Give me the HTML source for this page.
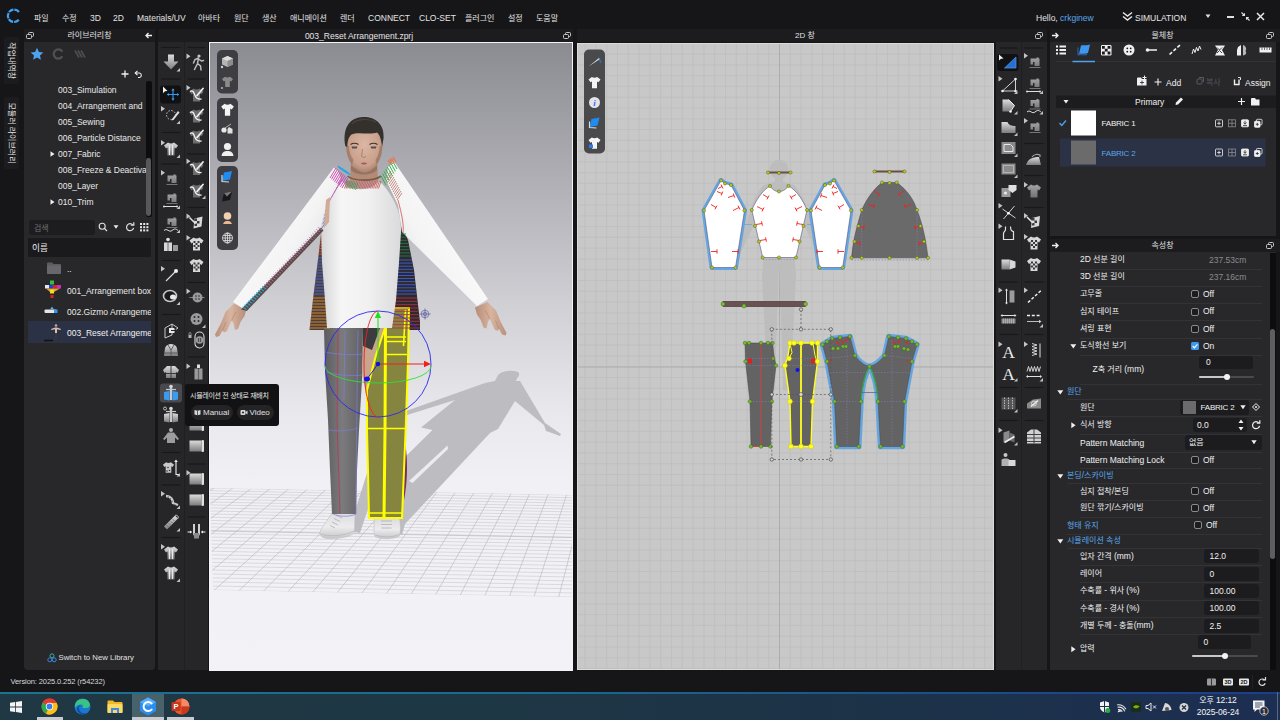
<!DOCTYPE html><html lang="ko"><head><meta charset="utf-8"><title>CLO</title><style>
*{margin:0;padding:0;box-sizing:border-box}
html,body{width:1280px;height:720px;overflow:hidden;background:#161619}
body{position:relative;font-family:"Liberation Sans","Noto Sans CJK KR",sans-serif;font-size:9px;color:#e6e6e6}
div,span.t,svg{position:absolute}
span.t{white-space:nowrap;line-height:1;letter-spacing:0}
span.t i{font-style:normal;font-size:1.0625em;line-height:0}
.k{font-family:"Noto Sans CJK KR","Liberation Sans",sans-serif}
</style></head><body><div style="left:4px;top:36.5px;width:15px;height:47.5px;background:#1c1c1f;border-radius:2px"></div><div style="left:4px;top:97px;width:15px;height:72px;background:#1c1c1f;border-radius:2px"></div><span class="t" style="left:14.5px;top:36.5px;font-size:8px;color:#e4e4e4;transform-origin:0 0;transform:rotate(90deg);letter-spacing:0;width:47.5px;text-align:center">작업내역창</span><span class="t" style="left:14.5px;top:97px;font-size:8px;color:#e4e4e4;transform-origin:0 0;transform:rotate(90deg);letter-spacing:0;width:72px;text-align:center">모듈러 라이브러리</span><div style="left:24px;top:42px;width:131px;height:628px;background:#28282b;border-radius:0 0 4px 4px"></div><div style="left:158px;top:42px;width:26px;height:628px;background:#262629;"></div><div style="left:184px;top:42px;width:1px;height:628px;background:#1f1f22;"></div><div style="left:185px;top:42px;width:23px;height:628px;background:#262629;"></div><div style="left:996px;top:42px;width:25px;height:628px;background:#262629;"></div><div style="left:1021px;top:42px;width:1px;height:628px;background:#1f1f22;"></div><div style="left:1022px;top:42px;width:25px;height:628px;background:#262629;"></div><div style="left:1050px;top:42px;width:226px;height:194px;background:#28282b;"></div><div style="left:1050px;top:252px;width:226px;height:418px;background:#28282b;"></div><span class="t" style="left:34px;top:14.6px;font-size:8px;color:#e4e4e4;">파일</span><span class="t" style="left:62px;top:14.6px;font-size:8px;color:#e4e4e4;">수정</span><span class="t" style="left:90px;top:14px;font-size:8.5px;color:#e4e4e4;">3D</span><span class="t" style="left:113px;top:14px;font-size:8.5px;color:#e4e4e4;">2D</span><span class="t" style="left:137px;top:14px;font-size:8.5px;color:#e4e4e4;">Materials/UV</span><span class="t" style="left:198px;top:14.6px;font-size:8px;color:#e4e4e4;">아바타</span><span class="t" style="left:234px;top:14.6px;font-size:8px;color:#e4e4e4;">원단</span><span class="t" style="left:262px;top:14.6px;font-size:8px;color:#e4e4e4;">생산</span><span class="t" style="left:290px;top:14.6px;font-size:8px;color:#e4e4e4;">애니메이션</span><span class="t" style="left:340px;top:14.6px;font-size:8px;color:#e4e4e4;">렌더</span><span class="t" style="left:368px;top:14px;font-size:8.5px;color:#e4e4e4;">CONNECT</span><span class="t" style="left:419px;top:14px;font-size:8.5px;color:#e4e4e4;">CLO-SET</span><span class="t" style="left:465px;top:14.6px;font-size:8px;color:#e4e4e4;">플러그인</span><span class="t" style="left:508px;top:14.6px;font-size:8px;color:#e4e4e4;">설정</span><span class="t" style="left:536px;top:14.6px;font-size:8px;color:#e4e4e4;">도움말</span><svg style="left:5px;top:7px" width="18" height="18" viewBox="0 0 18 18"><path d="M14 5A6.2 6.2 0 1 0 14 12.6" fill="none" stroke="#3da2f5" stroke-width="2.2" stroke-dasharray="5.2 0.9"/></svg><span class="t" style="left:1036px;top:14px;font-size:8.5px;color:#e4e4e4;">Hello, <span style="color:#5aa7ea">crkginew</span></span><svg style="left:1122px;top:11px" width="11" height="10" viewBox="0 0 11 10"><path d="M1 1.5L5.5 5L10 1.5M1 5.5L5.5 9L10 5.5" fill="none" stroke="#e8e8e8" stroke-width="1.4"/></svg><span class="t" style="left:1135px;top:14px;font-size:8.5px;color:#e8e8e8;">SIMULATION</span><svg style="left:1205px;top:14px" width="6" height="5"><path d="M0.5 0.5H5.5L3 4z" fill="#e0e0e0"/></svg><div style="left:1227px;top:16px;width:7px;height:1.5px;background:#e0e0e0;"></div><svg style="left:1241px;top:12px" width="9" height="9" viewBox="0 0 9 9"><path d="M0.5 0.5L3.5 3.5M3.5 1.2V3.5H1.2M8.5 8.5L5.5 5.5M5.5 7.8V5.5H7.8" fill="none" stroke="#e0e0e0" stroke-width="1.1"/></svg><svg style="left:1256px;top:12px" width="9" height="9" viewBox="0 0 9 9"><path d="M1 1L8 8M8 1L1 8" fill="none" stroke="#e8e8e8" stroke-width="1.5"/></svg><div style="left:24px;top:29px;width:131px;height:13px;background:#1c1c1f;"></div><svg style="left:26px;top:32px" width="8" height="7" viewBox="0 0 8 7"><rect x="2.5" y="0.5" width="5" height="4" rx="1" fill="none" stroke="#c8c8c8" stroke-width="1"/><rect x="0.5" y="2.5" width="5" height="4" rx="1" fill="#1d1d20" stroke="#c8c8c8" stroke-width="1"/></svg><span class="t" style="left:24px;top:32px;font-size:8px;color:#e0e0e0;width:131px;text-align:center;">라이브러리창</span><svg style="left:145px;top:32px" width="7" height="7" viewBox="0 0 7 7"><path d="M7 3.5H1M3.5 1L1 3.5L3.5 6" fill="none" stroke="#f0f0f0" stroke-width="1.3"/></svg><div style="left:158px;top:29px;width:415px;height:13px;background:#1c1c1f;"></div><span class="t" style="left:209px;top:32px;font-size:8.5px;color:#e4e4e4;width:300px;text-align:center;">003_Reset Arrangement.zprj</span><svg style="left:563px;top:32px" width="8" height="7" viewBox="0 0 8 7"><rect x="2.5" y="0.5" width="5" height="4" rx="1" fill="none" stroke="#c8c8c8" stroke-width="1"/><rect x="0.5" y="2.5" width="5" height="4" rx="1" fill="#1d1d20" stroke="#c8c8c8" stroke-width="1"/></svg><div style="left:577px;top:29px;width:470px;height:13px;background:#1c1c1f;"></div><span class="t" style="left:705px;top:32px;font-size:8px;color:#e0e0e0;width:200px;text-align:center;">2D 창</span><svg style="left:1035px;top:32px" width="8" height="7" viewBox="0 0 8 7"><rect x="2.5" y="0.5" width="5" height="4" rx="1" fill="none" stroke="#c8c8c8" stroke-width="1"/><rect x="0.5" y="2.5" width="5" height="4" rx="1" fill="#1d1d20" stroke="#c8c8c8" stroke-width="1"/></svg><div style="left:1050px;top:29px;width:230px;height:13px;background:#1c1c1f;"></div><svg style="left:1052px;top:32px" width="7" height="7" viewBox="0 0 7 7"><path d="M0 3.5H6M3.5 1L6 3.5L3.5 6" fill="none" stroke="#f0f0f0" stroke-width="1.3"/></svg><span class="t" style="left:1050px;top:32px;font-size:8px;color:#e0e0e0;width:225px;text-align:center;">물체창</span><svg style="left:1266px;top:32px" width="8" height="7" viewBox="0 0 8 7"><rect x="2.5" y="0.5" width="5" height="4" rx="1" fill="none" stroke="#c8c8c8" stroke-width="1"/><rect x="0.5" y="2.5" width="5" height="4" rx="1" fill="#1d1d20" stroke="#c8c8c8" stroke-width="1"/></svg><div style="left:1050px;top:239px;width:230px;height:13px;background:#1c1c1f;"></div><svg style="left:1052px;top:242px" width="7" height="7" viewBox="0 0 7 7"><path d="M0 3.5H6M3.5 1L6 3.5L3.5 6" fill="none" stroke="#f0f0f0" stroke-width="1.3"/></svg><span class="t" style="left:1050px;top:242px;font-size:8px;color:#e0e0e0;width:225px;text-align:center;">속성창</span><svg style="left:1266px;top:242px" width="8" height="7" viewBox="0 0 8 7"><rect x="2.5" y="0.5" width="5" height="4" rx="1" fill="none" stroke="#c8c8c8" stroke-width="1"/><rect x="0.5" y="2.5" width="5" height="4" rx="1" fill="#1d1d20" stroke="#c8c8c8" stroke-width="1"/></svg><span class="t" style="left:10.5px;top:678px;font-size:7.5px;color:#d8d8d8;letter-spacing:-0.1px;">Version: 2025.0.252 (r54232)</span><svg style="left:1205px;top:677px" width="70" height="10" viewBox="0 0 70 10"><rect x="2" y="1.5" width="9" height="7" rx="1" fill="#9a9a9a"/><rect x="6" y="1.5" width="1" height="7" fill="#333"/><rect x="18" y="1.5" width="10" height="7" rx="1" fill="#e8e8e8"/><text x="23" y="7.3" font-size="5.5" font-weight="bold" text-anchor="middle" fill="#161619" font-family="Liberation Sans,sans-serif">3D</text><rect x="34" y="1.5" width="10" height="7" rx="1" fill="#e8e8e8"/><text x="39" y="7.3" font-size="5.5" font-weight="bold" text-anchor="middle" fill="#161619" font-family="Liberation Sans,sans-serif">2D</text><path d="M59.5 3A3.2 3.2 0 1 0 60.2 6.2" fill="none" stroke="#e0e0e0" stroke-width="1.2"/><path d="M57.5 2.8H60.5V0" fill="none" stroke="#e0e0e0" stroke-width="1.2"/></svg><div style="left:1252px;top:675px;width:1px;height:14px;background:#222225;"></div><div style="left:0px;top:693px;width:1280px;height:27px;background:linear-gradient(90deg,#1f3843 0%,#1e3744 35%,#1c3248 70%,#1c2e52 100%);"></div><div style="left:0px;top:692px;width:1280px;height:1.8px;background:linear-gradient(90deg,#1b7393 0%,#1b6a90 40%,#1a4a8c 80%,#1a3f8a 100%);"></div><svg style="left:10px;top:701px" width="12" height="12" viewBox="0 0 12 12"><path d="M0 1.8L5 1.1V5.6H0zM5.8 1L12 0V5.6H5.8zM0 6.4H5V10.9L0 10.2zM5.8 6.4H12V12L5.8 11z" fill="#f4f4f4"/></svg><svg style="left:41px;top:698px" width="17" height="17" viewBox="0 0 17 17"><circle cx="8.5" cy="8.5" r="8" fill="#e33b2e"/><path d="M8.5 8.5L1.6 4.5A8 8 0 0 0 5 15.7z" fill="#2da94f"/><path d="M8.5 8.5L5 15.7A8 8 0 0 0 15.6 4.8H8.5z" fill="#fbc116"/><path d="M1.6 4.5A8 8 0 0 1 15.6 4.8H8.5z" fill="#e33b2e"/><circle cx="8.5" cy="8.5" r="3.7" fill="#fff"/><circle cx="8.5" cy="8.5" r="2.9" fill="#3b7ded"/></svg><div style="left:37px;top:717px;width:26px;height:3px;background:#c8ccd0;"></div><svg style="left:74px;top:698px" width="17" height="17" viewBox="0 0 17 17"><circle cx="8.5" cy="8.5" r="8" fill="#1b78d0"/><path d="M1 7A7.8 7.8 0 0 1 16 6.5C16 9 14 10 12 10H8.5C9.5 8 9 6.5 7 6.5C4 6.5 2 8 1 10z" fill="#39c481"/><path d="M3 12A6 6 0 0 0 13 14.5C10 16 6 15 5 11C4.5 9 6 7 7.5 7C5 7 2.5 9 3 12z" fill="#0c4f9e"/></svg><svg style="left:107px;top:699px" width="16" height="15" viewBox="0 0 16 15"><path d="M0.5 2.5A1 1 0 0 1 1.5 1.5H6L7.5 3H14.5A1 1 0 0 1 15.5 4V13A1 1 0 0 1 14.5 14H1.5A1 1 0 0 1 0.5 13z" fill="#f3b723"/><rect x="0.5" y="5" width="15" height="9" rx="1" fill="#fcd866"/><rect x="4" y="9" width="8" height="5" fill="#3a8be0"/><rect x="6" y="11" width="4" height="3" fill="#fcd866"/></svg><div style="left:132px;top:693.5px;width:32px;height:26.5px;background:#47626b;"></div><div style="left:132px;top:717px;width:32px;height:3px;background:#c8ccd0;"></div><svg style="left:139px;top:697px" width="18" height="19" viewBox="0 0 18 19"><path d="M9 0.5L17 5V14L9 18.5L1 14V5z" fill="#2b8df2"/><path d="M9 0.5L17 5L9 9.5L1 5z" fill="#55aefc"/><path d="M12.6 6.4A4.6 4.6 0 1 0 12.6 12.6" fill="none" stroke="#fff" stroke-width="2" stroke-linecap="round"/></svg><svg style="left:171px;top:698px" width="19" height="17" viewBox="0 0 19 17"><circle cx="10.5" cy="8.5" r="8" fill="#e8552f"/><path d="M10.5 0.5A8 8 0 0 1 18.5 8.5H10.5z" fill="#f58a65"/><path d="M10.5 8.5H18.5A8 8 0 0 1 10.5 16.5z" fill="#c93a1c"/><rect x="0.5" y="4" width="9" height="9" rx="1" fill="#c4381b"/><text x="5" y="11.3" font-size="7.5" font-weight="bold" text-anchor="middle" fill="#fff" font-family="Liberation Sans,sans-serif">P</text></svg><div style="left:167px;top:717px;width:27px;height:3px;background:#c8ccd0;"></div><svg style="left:1098px;top:698px" width="100" height="18" viewBox="0 0 100 18"><path d="M6.5 3L11 4.5V9C11 12 8.5 13.5 6.5 14.5C4.5 13.5 2 12 2 9V4.500z" fill="#f2f2f2"/><path d="M6.5 3V14.5M2 8.500H11" stroke="#1c3048" stroke-width="1"/><circle cx="9.800" cy="12.500" r="2.500" fill="#2fa84f"/><path d="M20 14A1 1 0 0 1 22 14M20 11.500A4 4 0 0 1 24 14M20 9A6.500 6.500 0 0 1 26.500 14M20 6.500A9 9 0 0 1 28 12" fill="none" stroke="#e8e8e8" stroke-width="1.1" transform="rotate(-8 22 12)"/><rect x="33" y="4" width="10" height="10" fill="#1d2b1d"/><path d="M35 9C36.500 7 39.500 6.500 41.500 8.500C40 10.500 37 11 35 9z" fill="#76b900"/><path d="M48 7.500H50L53 5V13L50 10.500H48z" fill="none" stroke="#e8e8e8" stroke-width="1"/><path d="M55 7.500L58 10.500M58 7.500L55 10.500" stroke="#e8e8e8" stroke-width="1"/><path d="M64 13L67 5C70 5 73 8 73.500 12z" fill="#d8d8d8"/><circle cx="69" cy="11" r="2" fill="#555"/><circle cx="86" cy="9.500" r="4.500" fill="#d4d4d4"/><path d="M84 7.500L88 11.500M88 7.500L84 11.500" stroke="#1c3048" stroke-width="1.3"/></svg><span class="t" style="left:1196px;top:696.6px;font-size:8px;color:#f4f4f4;width:44px;text-align:center;letter-spacing:-0.1px;">오후 <i>12:12</i></span><span class="t" style="left:1192px;top:708px;font-size:8.5px;color:#f4f4f4;width:52px;text-align:center;letter-spacing:-0.1px;">2025-06-24</span><svg style="left:1250px;top:699px" width="20" height="18" viewBox="0 0 20 18"><path d="M3 1.500H14.500V10.500H7L4.500 13V10.500H3z" fill="#f4f4f4"/><path d="M5 4H12.500M5 6H12.500M5 8H10" stroke="#1c3050" stroke-width="0.8"/><circle cx="14" cy="12" r="4.200" fill="#2c2c30" stroke="#d8d8d8" stroke-width="0.8"/><text x="14" y="14.600" font-size="7" text-anchor="middle" fill="#fff" font-family="Liberation Sans,sans-serif">1</text></svg><div style="left:1277px;top:692px;width:1px;height:28px;background:#5a6a80;"></div><svg style="left:30px;top:47px" width="14" height="14" viewBox="0 0 14 14"><path d="M7 0.800L8.900 4.900L13.300 5.400L10 8.400L10.900 12.800L7 10.600L3.100 12.800L4 8.400L0.700 5.400L5.100 4.900z" fill="#4da3f0"/></svg><svg style="left:52px;top:48px" width="12" height="12" viewBox="0 0 12 12"><path d="M9.800 3A4.600 4.600 0 1 0 9.800 9" fill="none" stroke="#505054" stroke-width="2.300" stroke-linecap="round"/></svg><svg style="left:74px;top:49px" width="12" height="10" viewBox="0 0 12 10"><path d="M1 1.500L5 8.500M4 1.500L8 8.500M7 1.500L11 8.500" stroke="#4c4c50" stroke-width="1.800" fill="none"/></svg><svg style="left:121px;top:70px" width="8" height="8" viewBox="0 0 8 8"><path d="M4 0.500V7.500M0.500 4H7.500" stroke="#f0f0f0" stroke-width="1.300"/></svg><svg style="left:134px;top:70px" width="9" height="8" viewBox="0 0 9 8"><path d="M1.500 3H5.500A2.300 2.300 0 0 1 5.500 7.500H4" fill="none" stroke="#f0f0f0" stroke-width="1.100"/><path d="M3.500 0.800L1.200 3L3.500 5.200" fill="none" stroke="#f0f0f0" stroke-width="1.100"/></svg><span class="t" style="left:58px;top:86.2px;font-size:8.5px;color:#e8e8e8;">003_Simulation</span><span class="t" style="left:58px;top:102.2px;font-size:8.5px;color:#e8e8e8;">004_Arrangement and</span><span class="t" style="left:58px;top:118.2px;font-size:8.5px;color:#e8e8e8;">005_Sewing</span><span class="t" style="left:58px;top:134.2px;font-size:8.5px;color:#e8e8e8;">006_Particle Distance</span><span class="t" style="left:58px;top:150.2px;font-size:8.5px;color:#e8e8e8;">007_Fabric</span><svg style="left:50px;top:151px" width="5" height="6"><path d="M0.500 0.300L4.500 3L0.500 5.700z" fill="#f0f0f0"/></svg><span class="t" style="left:58px;top:166.2px;font-size:8.5px;color:#e8e8e8;">008_Freeze &amp; Deactiva</span><span class="t" style="left:58px;top:182.2px;font-size:8.5px;color:#e8e8e8;">009_Layer</span><span class="t" style="left:58px;top:198.2px;font-size:8.5px;color:#e8e8e8;">010_Trim</span><svg style="left:50px;top:199px" width="5" height="6"><path d="M0.500 0.300L4.500 3L0.500 5.700z" fill="#f0f0f0"/></svg><div style="left:145.5px;top:81px;width:6.5px;height:136px;background:#0d0d0e;border-radius:2px"></div><div style="left:146.3px;top:158px;width:4.8px;height:57.5px;background:#58585a;border-radius:2.400px"></div><div style="left:29px;top:220px;width:66px;height:15px;background:#1d1d20;border-radius:3px"></div><span class="t" style="left:34px;top:224.5px;font-size:8px;color:#6e6e72;">검색</span><svg style="left:98px;top:222px" width="10" height="10" viewBox="0 0 10 10"><circle cx="4.200" cy="4.200" r="3" fill="none" stroke="#e0e0e0" stroke-width="1.100"/><path d="M6.400 6.400L9 9" stroke="#e0e0e0" stroke-width="1.300"/></svg><svg style="left:113px;top:225px" width="6" height="4"><path d="M0.500 0.300H5.500L3 3.800z" fill="#e8e8e8"/></svg><svg style="left:125px;top:222px" width="10" height="10" viewBox="0 0 10 10"><path d="M7.800 3A3.500 3.500 0 1 0 8.500 5.800" fill="none" stroke="#e0e0e0" stroke-width="1.200"/><path d="M5.800 3.200H8.800V0.300" fill="none" stroke="#e0e0e0" stroke-width="1.200"/></svg><svg style="left:140px;top:223px" width="9" height="9" viewBox="0 0 9 9"><g fill="#e8e8e8"><rect x="0" y="0" width="2" height="2"/><rect x="3.200" y="0" width="2" height="2"/><rect x="6.400" y="0" width="2" height="2"/><rect x="0" y="3.200" width="2" height="2"/><rect x="3.200" y="3.200" width="2" height="2"/><rect x="6.400" y="3.200" width="2" height="2"/><rect x="0" y="6.400" width="2" height="2"/><rect x="3.200" y="6.400" width="2" height="2"/><rect x="6.400" y="6.400" width="2" height="2"/></g></svg><div style="left:28px;top:238px;width:123px;height:19px;background:#1a1a1d;"></div><span class="t" style="left:32px;top:244px;font-size:8.6px;color:#f0f0f0;">이름</span><div style="left:28px;top:321px;width:123px;height:22px;background:#2b3245;"></div><svg style="left:47px;top:262px" width="14" height="12" viewBox="0 0 14 12"><path d="M0 1.500A1 1 0 0 1 1 0.500H5L6.500 2H13A1 1 0 0 1 14 3V11A1 1 0 0 1 13 12H1A1 1 0 0 1 0 11z" fill="#5c5c60"/><rect x="0" y="3.500" width="14" height="8.500" rx="1" fill="#68686c"/></svg><span class="t" style="left:67px;top:265px;font-size:8.5px;color:#e8e8e8;">..</span><svg style="left:44px;top:280px" width="20" height="19" viewBox="0 0 20 19"><rect x="6" y="0.500" width="4" height="4" fill="#30c040"/><rect x="1" y="5" width="4" height="3.500" fill="#e8e8e8"/><rect x="5" y="5" width="4" height="3.500" fill="#2040e0"/><rect x="9" y="5" width="4" height="3.500" fill="#e02020"/><rect x="13" y="5" width="4" height="3.500" fill="#c030c0"/><path d="M2 8.500L6 12H10L16 8.500z" fill="#e0a030"/><rect x="6" y="9.500" width="4" height="4" fill="#e8e020"/><rect x="6.500" y="15" width="3" height="3" fill="#e02020"/></svg><span class="t" style="left:67px;top:287px;font-size:8.5px;color:#e8e8e8;">001_Arrangement box</span><svg style="left:44px;top:305px" width="16" height="11" viewBox="0 0 16 11"><rect x="0.500" y="4.500" width="12" height="3.500" rx="1" fill="#e4e4e4"/><rect x="10" y="4.500" width="3.500" height="3.500" fill="#3a90f0"/><path d="M8 1.500L10 4.500H6z" fill="#60b0e0"/></svg><span class="t" style="left:67px;top:308px;font-size:8.5px;color:#e8e8e8;">002.Gizmo Arrangeme</span><svg style="left:44px;top:323px" width="18" height="19" viewBox="0 0 18 19"><circle cx="12" cy="2.500" r="1.300" fill="#c8a890"/><path d="M7 6L11 4.500H13L17 6L16.500 7L13 6.300V10H11V6.300L7.500 7z" fill="#d8c0b0"/><path d="M11 10H13L13.300 17H12.300L12 11.500L11.700 17H10.700z" fill="#3a3a3a"/><path d="M0 17.500H9" stroke="#111" stroke-width="1.500"/></svg><span class="t" style="left:67px;top:329px;font-size:8.5px;color:#f0f0f0;">003_Reset Arrangeme</span><div style="left:151px;top:260px;width:4px;height:90px;background:#28282b;"></div><svg style="left:47px;top:653px" width="10" height="10" viewBox="0 0 10 10"><circle cx="5" cy="2.800" r="2" fill="none" stroke="#38b0a0" stroke-width="1"/><circle cx="2.800" cy="6.800" r="2" fill="none" stroke="#3a80e0" stroke-width="1"/><circle cx="7.200" cy="6.800" r="2" fill="none" stroke="#3a90e8" stroke-width="1"/></svg><span class="t" style="left:58.5px;top:654px;font-size:7.8px;color:#e0e0e0;">Switch to New Library</span><svg style="left:0;top:0" width="1280" height="720" viewBox="0 0 1280 720"><defs><linearGradient id="ig" x1="0" y1="0" x2="0" y2="1"><stop offset="0" stop-color="#dcdcdc"/><stop offset="1" stop-color="#7c7c7c"/></linearGradient><linearGradient id="ig2" x1="0" y1="0" x2="0" y2="1"><stop offset="0" stop-color="#a4a4a4"/><stop offset="1" stop-color="#727272"/></linearGradient></defs><path d="M161.5 47.5H180.5" stroke="#18181a" stroke-width="1.200"/><path d="M161.5 79H180.5" stroke="#18181a" stroke-width="1.200"/><path d="M161.5 132.5H180.5" stroke="#18181a" stroke-width="1.200"/><path d="M161.5 164H180.5" stroke="#18181a" stroke-width="1.200"/><path d="M161.5 260.5H180.5" stroke="#18181a" stroke-width="1.200"/><path d="M161.5 314.5H180.5" stroke="#18181a" stroke-width="1.200"/><path d="M161.5 452.5H180.5" stroke="#18181a" stroke-width="1.200"/><path d="M161.5 485H180.5" stroke="#18181a" stroke-width="1.200"/><path d="M161.5 537.5H180.5" stroke="#18181a" stroke-width="1.200"/><path d="M187.5 47.5H205.5" stroke="#18181a" stroke-width="1.200"/><path d="M187.5 79H205.5" stroke="#18181a" stroke-width="1.200"/><path d="M187.5 154H205.5" stroke="#18181a" stroke-width="1.200"/><path d="M187.5 207.5H205.5" stroke="#18181a" stroke-width="1.200"/><path d="M187.5 282.5H205.5" stroke="#18181a" stroke-width="1.200"/><path d="M187.5 357H205.5" stroke="#18181a" stroke-width="1.200"/><path d="M187.5 464H205.5" stroke="#18181a" stroke-width="1.200"/><path d="M187.5 517H205.5" stroke="#18181a" stroke-width="1.200"/><rect x="160" y="383.500" width="22" height="19" rx="3" fill="#4a4a4e"/><g transform="translate(171 62.5)"><path d="M-3 -8H3V-1H7.500L0 7L-7.500 -1H-3z" fill="url(#ig)"/><path d="M9 5.500V9H5.500z" fill="#c0c0c0"/></g><rect x="160" y="85.5" width="21" height="18" rx="3" fill="#111113"/><g transform="translate(171 94)"><path d="M2 -4.500V5.500M-3 0.500H7" stroke="#3a9cf0" stroke-width="1.100"/><path d="M2 -5.800l1.600 2.200h-3.200zM2 6.800l1.600 -2.200h-3.200zM-4.300 0.500l2.200 -1.600v3.200zM8.300 0.500l-2.200 -1.600v3.200z" fill="#3a9cf0"/><path d="M-8 -7.500L-3.500 -3L-6 -2.800L-8 -0.800z" fill="#f4f4f4"/></g><g transform="translate(171 115)"><circle cx="0" cy="0" r="4.500" fill="none" stroke="#d0d0d0" stroke-width="0.900" stroke-dasharray="1.500 1.500"/><path d="M1 4L7 -4L8.500 -2.500L2.500 5L0.500 5.500z" fill="#e0e0e0"/><path d="M-10 -9L-6 -6.300L-10 -3.600z" fill="#c4c4c4"/><path d="M9 5.500V9H5.500z" fill="#c0c0c0"/></g><g transform="translate(171 149)"><path d="M-7 -3.500L-3 -6.500C-1.500 -5.300 1.500 -5.300 3 -6.500L7 -3.500L5 -0.500L3.500 -1.500V6.500H-3.500V-1.500L-5 -0.500z" fill="url(#ig)"/><path d="M-1.500 -4V6M1.500 -4V6" stroke="#e8e8e8" stroke-width="1"/><path d="M-10 -9L-6 -6.300L-10 -3.600z" fill="#c4c4c4"/><path d="M9 5.500V9H5.500z" fill="#c0c0c0"/></g><g transform="translate(171 179)"><path d="M-4.500 -4H1.500V-5H3.500V-4H4.500V3.500H-0.500V-0.500H-2V2H-4.500zM-5.500 4.600H5.500V5.600H-5.500z" fill="url(#ig2)" transform="translate(1 0.500)"/><path d="M-10 -9L-6 -6.300L-10 -3.600z" fill="#c4c4c4"/></g><g transform="translate(171 200)"><path d="M-4.500 -4H1.500V-5H3.500V-4H4.500V3.500H-0.500V-0.500H-2V2H-4.500zM-5.500 4.600H5.500V5.600H-5.500z" fill="url(#ig2)" transform="translate(1 -1.500)"/><path d="M-7 6.500H6" stroke="#e0e0e0" stroke-width="1"/><circle cx="-7" cy="6.500" r="1" fill="#e0e0e0"/><circle cx="6" cy="6.500" r="1" fill="#e0e0e0"/><path d="M9 5.500V9H5.500z" fill="#c0c0c0"/></g><g transform="translate(171 224)"><path d="M-4.500 -4H1.500V-5H3.500V-4H4.500V3.500H-0.500V-0.500H-2V2H-4.500zM-5.500 4.600H5.500V5.600H-5.500z" fill="url(#ig2)" transform="translate(1 -1.500)"/><path d="M-7 6.500C-4 3.500 -2 9 1 6.500S5 5 7 6.500" stroke="#e0e0e0" stroke-width="1" fill="none"/><path d="M9 5.500V9H5.500z" fill="#c0c0c0"/></g><g transform="translate(171 245)"><circle cx="-3" cy="-5.500" r="1.800" fill="#e0e0e0"/><path d="M-7 -2.500H1V6H-7z" fill="#d8d8d8"/><path d="M-3 -2.500V6" stroke="#555" stroke-width="0.800"/><path d="M2 0H7V6H2z" fill="#9a9a9a"/></g><g transform="translate(171 275)"><path d="M-5 6L4 -3" stroke="#e0e0e0" stroke-width="1.100"/><circle cx="5" cy="-4" r="2" fill="#f0f0f0"/><path d="M-10 -9L-6 -6.300L-10 -3.600z" fill="#c4c4c4"/></g><g transform="translate(171 296)"><ellipse cx="-1" cy="0" rx="6.500" ry="5.500" fill="#1a1a1a" stroke="#c8c8c8" stroke-width="1.600"/><ellipse cx="2" cy="1" rx="3" ry="2.500" fill="#e8e8e8"/><path d="M9 5.500V9H5.500z" fill="#c0c0c0"/></g><g transform="translate(171 330)"><path d="M-6 -2L1 -6V5L-6 8z" fill="none" stroke="#c8c8c8" stroke-width="1"/><path d="M1 -6L7 -2L1 2" fill="none" stroke="#c8c8c8" stroke-width="1"/><path d="M-2 -2H4V3H-2z" fill="#e8e8e8"/><path d="M0 0.500H5M3 -1.500L5.500 0.500L3 2.500" stroke="#222" stroke-width="1" fill="none"/></g><g transform="translate(171 350)"><path d="M-7 6L-6 -2C-5 -5 -2 -6 0 -6S5 -5 6 -2L7 6z" fill="url(#ig)"/><path d="M-3 -5L0 0L3 -5M0 0V6M-7 3H7" stroke="#555" stroke-width="0.900" fill="none"/></g><g transform="translate(171 371)"><path d="M-8 -1L-4 -5H4L8 -1L6.500 2L5 1V7H-5V1L-6.500 2z" fill="url(#ig)"/><path d="M0 -5V7M-5 2.500H5" stroke="#3a3a3a" stroke-width="1" fill="none"/></g><g transform="translate(171 393)"><circle cx="0" cy="-6.500" r="1.800" fill="#d8d8d8"/><path d="M-1.200 -5H1.200V7H-1.200z" fill="#c8c8c8"/><path d="M-7 -1L-1.500 -2V7.500L-7 6.500z" fill="#3a9cf0"/><path d="M7 -1L1.500 -2V7.500L7 6.500z" fill="#3a9cf0"/><path d="M-5 -3.500H5" stroke="#c8c8c8" stroke-width="1.200"/></g><g transform="translate(171 415)"><circle cx="0" cy="-6.500" r="1.800" fill="#d8d8d8"/><path d="M-1.200 -5H1.200V7H-1.200z" fill="#c8c8c8"/><path d="M-7 -1L-1.500 -2V7.500L-7 6.500z" fill="url(#ig)"/><path d="M7 -1L1.500 -2V7.500L7 6.500z" fill="url(#ig)"/><path d="M-5 -3.500H5" stroke="#c8c8c8" stroke-width="1.200"/><circle cx="-6" cy="-6.500" r="1.500" fill="none" stroke="#e0e0e0" stroke-width="0.800"/></g><g transform="translate(171 436)"><circle cx="0" cy="-6" r="2" fill="#b0b0b0"/><path d="M-8 3L-3 -3.500H3L8 3L6.500 4L4 1.500V7H-4V1.500L-6.500 4z" fill="#9c9c9c"/></g><g transform="translate(171 467.5)"><path d="M-7 -3.500L-3 -6.500C-1.500 -5.300 1.500 -5.300 3 -6.500L7 -3.500L5 -0.500L3.500 -1.500V6.500H-3.500V-1.500L-5 -0.500z" fill="#c8c8c8" transform="translate(-2.500 0) scale(0.800)"/><circle cx="-3" cy="0" r="0.800" fill="#333"/><circle cx="-1.500" cy="3" r="0.800" fill="#333"/><circle cx="-4" cy="3.500" r="0.800" fill="#333"/><path d="M5 -6.500V7H8" stroke="#f0f0f0" stroke-width="1.100" fill="none"/><path d="M5 -8l1.800 2.500h-3.600z" fill="#f0f0f0"/><path d="M9 5.500V9H5.500z" fill="#c0c0c0"/></g><g transform="translate(171 500)"><path d="M-5 -4C0 -4 2 0 2 3L7 5" stroke="#c8c8c8" stroke-width="2.400" fill="none"/><path d="M-3 -4l0.500 1.500M0 -2l-1 1.200M2 1l-1.500 0.500M4 4l-0.500 1.300" stroke="#333" stroke-width="0.600"/><path d="M-10 -9L-6 -6.300L-10 -3.600z" fill="#c4c4c4"/><path d="M9 5.500V9H5.500z" fill="#c0c0c0"/></g><g transform="translate(171 522.5)"><path d="M-7 4L4 -7L7 -4L-4 7z" fill="url(#ig)"/><path d="M-4 3l1.200 1.200M-2 1l1.200 1.200M0 -1l1.200 1.200M2 -3l1.200 1.200" stroke="#333" stroke-width="0.700"/><path d="M4 -7C6 -8 8 -6 7 -4" stroke="#c8c8c8" stroke-width="1" fill="none"/><path d="M9 5.500V9H5.500z" fill="#c0c0c0"/></g><g transform="translate(171 553)"><path d="M-7 -3.500L-3 -6.500C-1.500 -5.300 1.500 -5.300 3 -6.500L7 -3.500L5 -0.500L3.500 -1.500V6.500H-3.500V-1.500L-5 -0.500z" fill="url(#ig)"/><path d="M-1.500 -4V6M1.500 -4V6" stroke="#e8e8e8" stroke-width="1"/><path d="M-10 -9L-6 -6.300L-10 -3.600z" fill="#c4c4c4"/></g><g transform="translate(171 573)"><path d="M-7 -3.500L-3 -6.500C-1.500 -5.300 1.500 -5.300 3 -6.500L7 -3.500L5 -0.500L3.500 -1.500V6.500H-3.500V-1.500L-5 -0.500z" fill="url(#ig)"/><path d="M-1.500 -4V6M1.500 -4V6" stroke="#e8e8e8" stroke-width="1"/><path d="M9 5.500V9H5.500z" fill="#c0c0c0"/></g><g transform="translate(196.5 62.5)"><circle cx="2.500" cy="-6.500" r="1.600" fill="#c4c4c4"/><path d="M2 -4.500L-1.500 -3L-3 0.500M2 -4.500L1 1L-2 7M1 1L4 3.500L4.500 7.500M2 -3.500L5 -1.500L7 -2" stroke="#bcbcbc" stroke-width="1.500" fill="none" stroke-linecap="round"/><path d="M-10 -9L-6 -6.300L-10 -3.600z" fill="#c4c4c4"/></g><g transform="translate(196.5 94)"><path d="M-7 -3.500L-3 -6.500C-1.500 -5.300 1.500 -5.300 3 -6.500L7 -3.500L5 -0.500L3.500 -1.500V6.500H-3.500V-1.500L-5 -0.500z" fill="#6c6c6c" transform="translate(0 1)"/><path d="M-6.500 -2.500C-3 -4.500 -2.500 -1 -1.500 1.500S1.500 5.500 5 5" stroke="#f4f4f4" stroke-width="1.300" fill="none"/><path d="M0.500 1.500L6.500 -5.500" stroke="#f0f0f0" stroke-width="1.800" stroke-linecap="round"/><path d="M-10 -9L-6 -6.300L-10 -3.600z" fill="#c4c4c4"/></g><g transform="translate(196.5 115)"><path d="M-7 -3.500L-3 -6.500C-1.500 -5.300 1.500 -5.300 3 -6.500L7 -3.500L5 -0.500L3.500 -1.500V6.500H-3.500V-1.500L-5 -0.500z" fill="#6c6c6c" transform="translate(0 1)"/><path d="M-6.500 -2.500C-3 -4.500 -2.500 -1 -1.500 1.500S1.500 5.500 5 5" stroke="#f4f4f4" stroke-width="1.300" fill="none"/><path d="M0.500 1.500L6.500 -5.500" stroke="#f0f0f0" stroke-width="1.800" stroke-linecap="round"/></g><g transform="translate(196.5 136)"><path d="M-7 -3.500L-3 -6.500C-1.500 -5.300 1.500 -5.300 3 -6.500L7 -3.500L5 -0.500L3.500 -1.500V6.500H-3.500V-1.500L-5 -0.500z" fill="#6c6c6c" transform="translate(0 1)"/><path d="M-6.500 -2.500C-3 -4.500 -2.500 -1 -1.500 1.500S1.500 5.500 5 5" stroke="#f4f4f4" stroke-width="1.300" fill="none"/><path d="M0.500 1.500L6.500 -5.500" stroke="#f0f0f0" stroke-width="1.800" stroke-linecap="round"/></g><g transform="translate(196.5 167.5)"><path d="M-7 -3.500L-3 -6.500C-1.500 -5.300 1.500 -5.300 3 -6.500L7 -3.500L5 -0.500L3.500 -1.500V6.500H-3.500V-1.500L-5 -0.500z" fill="#6c6c6c" transform="translate(0 1)"/><path d="M-6.500 -2.500C-3 -4.500 -2.500 -1 -1.500 1.500S1.500 5.500 5 5" stroke="#f4f4f4" stroke-width="1.300" fill="none"/><path d="M0.500 1.500L6.500 -5.500" stroke="#f0f0f0" stroke-width="1.800" stroke-linecap="round"/><path d="M-10 -9L-6 -6.300L-10 -3.600z" fill="#c4c4c4"/></g><g transform="translate(196.5 190)"><path d="M-7 -3.500L-3 -6.500C-1.500 -5.300 1.500 -5.300 3 -6.500L7 -3.500L5 -0.500L3.500 -1.500V6.500H-3.500V-1.500L-5 -0.500z" fill="#6c6c6c" transform="translate(0 1)"/><path d="M-6.500 -2.500C-3 -4.500 -2.500 -1 -1.500 1.500S1.500 5.500 5 5" stroke="#f4f4f4" stroke-width="1.300" fill="none"/><path d="M0.500 1.500L6.500 -5.500" stroke="#f0f0f0" stroke-width="1.800" stroke-linecap="round"/><path d="M9 5.500V9H5.500z" fill="#c0c0c0"/></g><g transform="translate(196.5 222.5)"><path d="M-2 -4L6 -6L5 4L-3 6z" fill="#d8d8d8"/><path d="M-2 -4h2.500v2.500h-2.500zM0.500 -1.500h2.500v2.500h-2.500zM-2 1h2.500v2.500h-2.500z" fill="#3a3a3a"/><path d="M-7 -5L-1 1" stroke="#e8e8e8" stroke-width="1.500"/><path d="M-10 -9L-6 -6.300L-10 -3.600z" fill="#c4c4c4"/></g><g transform="translate(196.5 244)"><path d="M-7 -3.500L-3 -6.500C-1.500 -5.300 1.500 -5.300 3 -6.500L7 -3.500L5 -0.500L3.500 -1.500V6.500H-3.500V-1.500L-5 -0.500z" fill="#d8d8d8"/><path d="M-3 -3h2v2h-2zM1 -3h2v2h-2zM-1 -1h2v2h-2zM-3 1h2v2h-2zM1 1h2v2h-2zM-1 3h2v2h-2z" fill="#3a3a3a"/><path d="M-10 -9L-6 -6.300L-10 -3.600z" fill="#c4c4c4"/></g><g transform="translate(196.5 265.5)"><path d="M-7 -3.500L-3 -6.500C-1.500 -5.300 1.500 -5.300 3 -6.500L7 -3.500L5 -0.500L3.500 -1.500V6.500H-3.500V-1.500L-5 -0.500z" fill="#d8d8d8"/><path d="M-3 -3h2v2h-2zM1 -3h2v2h-2zM-1 -1h2v2h-2zM-3 1h2v2h-2zM1 1h2v2h-2zM-1 3h2v2h-2z" fill="#3a3a3a"/></g><g transform="translate(196.5 297.5)"><circle cx="1" cy="0" r="5" fill="#9a9a9a"/><circle cx="-0.500" cy="-1.500" r="0.800" fill="#2a2a2a"/><circle cx="2.500" cy="-1.500" r="0.800" fill="#2a2a2a"/><circle cx="-0.500" cy="1.500" r="0.800" fill="#2a2a2a"/><circle cx="2.500" cy="1.500" r="0.800" fill="#2a2a2a"/><path d="M-7 0H8" stroke="#9a9a9a" stroke-width="0.800"/><path d="M-10 -9L-6 -6.300L-10 -3.600z" fill="#c4c4c4"/></g><g transform="translate(196.5 319)"><circle cx="0" cy="0" r="6" fill="#9a9a9a"/><circle cx="-2" cy="-2" r="1" fill="#2a2a2a"/><circle cx="2" cy="-2" r="1" fill="#2a2a2a"/><circle cx="-2" cy="2" r="1" fill="#2a2a2a"/><circle cx="2" cy="2" r="1" fill="#2a2a2a"/><path d="M9 5.500V9H5.500z" fill="#c0c0c0"/></g><g transform="translate(196.5 340)"><rect x="-1.500" y="-8" width="9" height="16" rx="4.500" fill="none" stroke="#d8d8d8" stroke-width="1.100"/><circle cx="3" cy="0" r="3.800" fill="#9a9a9a"/><circle cx="2" cy="-1" r="0.700" fill="#222"/><circle cx="4" cy="-1" r="0.700" fill="#222"/><circle cx="2" cy="1" r="0.700" fill="#222"/><circle cx="4" cy="1" r="0.700" fill="#222"/><rect x="-8" y="-5" width="3" height="3" fill="#b0b0b0"/><path d="M-7.500 -5V-6.500A1 1 0 0 1 -5.500 -6.500V-5" stroke="#b0b0b0" stroke-width="0.700" fill="none"/></g><g transform="translate(196.5 372.5)"><rect x="-2" y="-4" width="8" height="11" fill="#9a9a9a"/><path d="M2 -4V7" stroke="#2a2a2a" stroke-width="1.200" stroke-dasharray="1 1"/><path d="M0.500 -8H3.500V-4.500H0.500z" fill="#e0e0e0"/><path d="M-10 -9L-6 -6.300L-10 -3.600z" fill="#c4c4c4"/></g><g transform="translate(196.5 425)"><rect x="-7" y="-5.500" width="12" height="11" fill="url(#ig)"/><rect x="5" y="-6" width="2.500" height="12" rx="1" fill="#e0e0e0"/></g><g transform="translate(196.5 446)"><rect x="-7" y="-5.500" width="12" height="11" fill="url(#ig)"/><rect x="5" y="-6" width="2.500" height="12" rx="1" fill="#e0e0e0"/></g><g transform="translate(196.5 479)"><rect x="-7" y="-5.500" width="12" height="11" fill="url(#ig)"/><rect x="5" y="-6" width="2.500" height="12" rx="1" fill="#e0e0e0"/><path d="M-10 -9L-6 -6.300L-10 -3.600z" fill="#c4c4c4"/></g><g transform="translate(196.5 500)"><rect x="-7" y="-5.500" width="12" height="11" fill="url(#ig)"/><rect x="5" y="-6" width="2.500" height="12" rx="1" fill="#e0e0e0"/></g><g transform="translate(196.5 531)"><path d="M-2.500 -7V2A2.500 2.500 0 0 0 2.500 2V-7" stroke="#d0d0d0" stroke-width="2" fill="none"/><rect x="-2.500" y="2" width="5" height="5.500" fill="#8a8a8a"/><path d="M-9 1H-5M9 1H5" stroke="#f0f0f0" stroke-width="1"/><path d="M-4.500 1l-2 -1.600v3.200zM4.500 1l2 -1.600v3.200z" fill="#f0f0f0"/></g><path d="M999.0 48H1018.0" stroke="#18181a" stroke-width="1.200"/><path d="M999.0 282H1018.0" stroke="#18181a" stroke-width="1.200"/><path d="M999.0 334.5H1018.0" stroke="#18181a" stroke-width="1.200"/><path d="M999.0 387.5H1018.0" stroke="#18181a" stroke-width="1.200"/><path d="M999.0 420.5H1018.0" stroke="#18181a" stroke-width="1.200"/><path d="M1024.5 48H1043.5" stroke="#18181a" stroke-width="1.200"/><path d="M1024.5 143.5H1043.5" stroke="#18181a" stroke-width="1.200"/><path d="M1024.5 175.5H1043.5" stroke="#18181a" stroke-width="1.200"/><path d="M1024.5 207.5H1043.5" stroke="#18181a" stroke-width="1.200"/><path d="M1024.5 282H1043.5" stroke="#18181a" stroke-width="1.200"/><path d="M1024.5 334.5H1043.5" stroke="#18181a" stroke-width="1.200"/><path d="M1024.5 387.5H1043.5" stroke="#18181a" stroke-width="1.200"/><path d="M1024.5 420.5H1043.5" stroke="#18181a" stroke-width="1.200"/><rect x="997.0" y="54" width="21.5" height="17" rx="3" fill="#111113"/><g transform="translate(1008.5 62)"><path d="M7.500 -5V6H-4z" fill="#2a6fd0"/><path d="M7.500 -5V6H-4z" fill="none" stroke="#4a9af0" stroke-width="0.700"/><path d="M-9.500 -7.500L-5 -3.500L-7.500 -3.300L-9.500 -1.500z" fill="#f4f4f4"/></g><g transform="translate(1008.5 85)"><path d="M7 -6V6H-6z" fill="none" stroke="#d0d0d0" stroke-width="1"/><circle cx="7" cy="-6" r="1.300" fill="#f0f0f0"/><circle cx="7" cy="6" r="1.300" fill="#f0f0f0"/><circle cx="-6" cy="6" r="1.300" fill="#f0f0f0"/><path d="M-10 -9L-6 -6.300L-10 -3.600z" fill="#c4c4c4"/><path d="M9 5.500V9H5.500z" fill="#c0c0c0"/></g><g transform="translate(1008.5 105.5)"><path d="M-6 -6H0L6 0L2 6H-6z" fill="url(#ig)"/><path d="M0 -6L6 0L2 6" stroke="#f0f0f0" stroke-width="1" fill="none"/><circle cx="2" cy="6" r="1.200" fill="#fff"/><path d="M9 5.500V9H5.500z" fill="#c0c0c0"/></g><g transform="translate(1008.5 127)"><path d="M-7 -5H-1C0 -2 3 -1 7 -1V6H-7z" fill="url(#ig)"/><path d="M9 5.500V9H5.500z" fill="#c0c0c0"/></g><g transform="translate(1008.5 148)"><path d="M-7 -6H7V6H-7z" fill="#8a8a8a"/><path d="M-4.500 -3.500H2L4.500 -1V3.500H-4.500z" fill="none" stroke="#e8e8e8" stroke-width="1"/><path d="M9 5.500V9H5.500z" fill="#c0c0c0"/></g><g transform="translate(1008.5 169)"><path d="M-7 -5.500H7V5.500H-7z" fill="#8a8a8a"/><path d="M-5 -3.500H5V3.500H-5z" fill="none" stroke="#e8e8e8" stroke-width="0.900" stroke-dasharray="1 1"/><path d="M9 5.500V9H5.500z" fill="#c0c0c0"/></g><g transform="translate(1008.5 191)"><path d="M-7 -3H2V6H-7z" fill="#9a9a9a"/><path d="M0 -6H8V-1L4 2L0 -1z" fill="#e0e0e0"/><circle cx="-3" cy="2" r="1.600" fill="#e8e8e8"/></g><g transform="translate(1008.5 212)"><path d="M-5 7L6 -6M-6 -3L7 6" stroke="#d0d0d0" stroke-width="1"/><circle cx="0" cy="1.300" r="1.300" fill="#fff"/><path d="M-10 -9L-6 -6.300L-10 -3.600z" fill="#c4c4c4"/></g><g transform="translate(1008.5 232.5)"><path d="M-3 -6V-3C-3 -1 -5 -1 -5 1V7H5V-1C3 -1 2 -3 2 -6" fill="none" stroke="#e0e0e0" stroke-width="1.200"/><path d="M-10 -9L-6 -6.300L-10 -3.600z" fill="#c4c4c4"/></g><g transform="translate(1008.5 264.5)"><path d="M-7 -5H1V5H-7z" fill="url(#ig)"/><path d="M1 -5L7 -3V3L1 5z" fill="#d8d8d8"/></g><g transform="translate(1008.5 296.5)"><path d="M-2 -7V7" stroke="#e0e0e0" stroke-width="1"/><path d="M-2 -8l1.500 2h-3zM-2 8l1.500 -2h-3z" fill="#e0e0e0"/><rect x="1" y="-6" width="5" height="12" fill="#8a8a8a"/><path d="M2.500 -6V6M4.500 -6V6" stroke="#ccc" stroke-width="0.500"/><path d="M-10 -9L-6 -6.300L-10 -3.600z" fill="#c4c4c4"/></g><g transform="translate(1008.5 318.5)"><path d="M-7 -3H7" stroke="#e0e0e0" stroke-width="1"/><path d="M-8 -3l2 -1.500v3zM8 -3l-2 -1.500v3z" fill="#e0e0e0"/><rect x="-7" y="0" width="14" height="5" fill="#8a8a8a"/><path d="M-5 0V5M-3 0V5M-1 0V5M1 0V5M3 0V5M5 0V5" stroke="#ccc" stroke-width="0.500"/></g><g transform="translate(1008.5 350.5)"><text x="0" y="7" font-size="17.500" text-anchor="middle" fill="#e8e8e8" font-family="Liberation Serif,serif">A</text><path d="M-10 -9L-6 -6.300L-10 -3.600z" fill="#c4c4c4"/></g><g transform="translate(1008.5 372.5)"><text x="0" y="7" font-size="17.500" text-anchor="middle" fill="#e8e8e8" font-family="Liberation Serif,serif">A</text><path d="M9 5.500V9H5.500z" fill="#c0c0c0"/></g><g transform="translate(1008.5 403.5)"><rect x="-7" y="-6" width="14" height="12" fill="#555"/><path d="M-4 -6V6M0 -6V6M4 -6V6" stroke="#d0d0d0" stroke-width="0.800" stroke-dasharray="1.500 1"/><path d="M9 5.500V9H5.500z" fill="#c0c0c0"/></g><g transform="translate(1008.5 436.5)"><path d="M-5 -4L1 -6V4L-5 6z" fill="#8a8a8a"/><path d="M1 -4L6 -2V6L1 4z" fill="#6a6a6a"/><path d="M-4 6L6 0" stroke="#f0f0f0" stroke-width="1.600"/><path d="M-10 -9L-6 -6.300L-10 -3.600z" fill="#c4c4c4"/><path d="M9 5.500V9H5.500z" fill="#c0c0c0"/></g><g transform="translate(1008.5 458)"><circle cx="-3" cy="-3" r="2" fill="#c8c8c8"/><path d="M-7 8V2C-7 0 1 0 1 2V8z" fill="#b0b0b0"/><rect x="0" y="2" width="7" height="6" fill="#d8d8d8"/></g><g transform="translate(1034 62)"><path d="M-4.500 -4H1.500V-5H3.500V-4H4.500V3.500H-0.500V-0.500H-2V2H-4.500zM-5.500 4.600H5.500V5.600H-5.500z" fill="url(#ig2)" transform="translate(1 0.500)"/><path d="M-10 -9L-6 -6.300L-10 -3.600z" fill="#c4c4c4"/></g><g transform="translate(1034 85)"><path d="M-4.500 -4H1.500V-5H3.500V-4H4.500V3.500H-0.500V-0.500H-2V2H-4.500zM-5.500 4.600H5.500V5.600H-5.500z" fill="url(#ig2)" transform="translate(1 -1.500)"/><path d="M-7 6.500H6" stroke="#e0e0e0" stroke-width="1"/><circle cx="-7" cy="6.500" r="1" fill="#e0e0e0"/><circle cx="6" cy="6.500" r="1" fill="#e0e0e0"/><path d="M9 5.500V9H5.500z" fill="#c0c0c0"/></g><g transform="translate(1034 105.5)"><path d="M-4.500 -4H1.500V-5H3.500V-4H4.500V3.500H-0.500V-0.500H-2V2H-4.500zM-5.500 4.600H5.500V5.600H-5.500z" fill="url(#ig2)" transform="translate(1 -1.500)"/><path d="M-7 6.500C-4 3.500 -2 9 1 6.500S5 5 7 6.500" stroke="#e0e0e0" stroke-width="1" fill="none"/><path d="M9 5.500V9H5.500z" fill="#c0c0c0"/></g><g transform="translate(1034 127)"><path d="M-4.500 -4H1.500V-5H3.500V-4H4.500V3.500H-0.500V-0.500H-2V2H-4.500zM-5.500 4.600H5.500V5.600H-5.500z" fill="url(#ig2)" transform="translate(1 0.500)"/><path d="M-10 -9L-6 -6.300L-10 -3.600z" fill="#c4c4c4"/></g><g transform="translate(1034 159)"><path d="M-8 6C-6 0 -2 -2 5 -2L7 6z" fill="url(#ig)"/><path d="M-2 -2C0 -5 4 -5 6 -4L6 -2" stroke="#a0a0a0" stroke-width="1.200" fill="none"/></g><g transform="translate(1034 191)"><path d="M-7 -3.500L-3 -6.500C-1.500 -5.300 1.500 -5.300 3 -6.500L7 -3.500L5 -0.500L3.500 -1.500V6.500H-3.500V-1.500L-5 -0.500z" fill="url(#ig2)"/><path d="M-10 -9L-6 -6.300L-10 -3.600z" fill="#c4c4c4"/></g><g transform="translate(1034 222)"><path d="M-2 -4L6 -6L5 4L-3 6z" fill="#d8d8d8"/><path d="M-2 -4h2.500v2.500h-2.500zM0.500 -1.500h2.500v2.500h-2.500zM-2 1h2.500v2.500h-2.500z" fill="#3a3a3a"/><path d="M-7 -5L-1 1" stroke="#e8e8e8" stroke-width="1.500"/><path d="M-10 -9L-6 -6.300L-10 -3.600z" fill="#c4c4c4"/></g><g transform="translate(1034 243)"><path d="M-7 -3.500L-3 -6.500C-1.500 -5.300 1.500 -5.300 3 -6.500L7 -3.500L5 -0.500L3.500 -1.500V6.500H-3.500V-1.500L-5 -0.500z" fill="#d8d8d8"/><path d="M-3 -3h2v2h-2zM1 -3h2v2h-2zM-1 -1h2v2h-2zM-3 1h2v2h-2zM1 1h2v2h-2zM-1 3h2v2h-2z" fill="#3a3a3a"/><path d="M-10 -9L-6 -6.300L-10 -3.600z" fill="#c4c4c4"/></g><g transform="translate(1034 264.5)"><path d="M-7 -3.500L-3 -6.500C-1.500 -5.300 1.500 -5.300 3 -6.500L7 -3.500L5 -0.500L3.500 -1.500V6.500H-3.500V-1.500L-5 -0.500z" fill="#d8d8d8"/><path d="M-3 -3h2v2h-2zM1 -3h2v2h-2zM-1 -1h2v2h-2zM-3 1h2v2h-2zM1 1h2v2h-2zM-1 3h2v2h-2z" fill="#3a3a3a"/></g><g transform="translate(1034 296.5)"><path d="M-6 6L7 -6" stroke="#f0f0f0" stroke-width="1.500" stroke-dasharray="3 1.800"/><path d="M-10 -9L-6 -6.300L-10 -3.600z" fill="#c4c4c4"/></g><g transform="translate(1034 318.5)"><path d="M-7 -3H7" stroke="#f0f0f0" stroke-width="1.500" stroke-dasharray="3 1.800"/><path d="M-7 3H6" stroke="#d0d0d0" stroke-width="0.900"/><path d="M7.500 3l-2.500 -1.800v3.600z" fill="#d0d0d0"/><path d="M9 5.500V9H5.500z" fill="#c0c0c0"/></g><g transform="translate(1034 350.5)"><path d="M-2 -7l5 1.500l-5 1.500l5 1.500l-5 1.500l5 1.500l-5 1.500l5 1.500l-5 1.500" stroke="#e0e0e0" stroke-width="0.900" fill="none"/><path d="M6 -7V7" stroke="#e0e0e0" stroke-width="1"/><path d="M-10 -9L-6 -6.300L-10 -3.600z" fill="#c4c4c4"/></g><g transform="translate(1034 372.5)"><path d="M-7 -1l1.500 -5l1.500 5l1.500 -5l1.500 5l1.500 -5l1.500 5l1.500 -5l1.500 5l1.500 -5" stroke="#e0e0e0" stroke-width="0.900" fill="none"/><path d="M-7 4H7" stroke="#e0e0e0" stroke-width="1"/><path d="M-8 4l2 -1.500v3zM8 4l-2 -1.500v3z" fill="#e0e0e0"/><path d="M9 5.500V9H5.500z" fill="#c0c0c0"/></g><g transform="translate(1034 403.5)"><path d="M-7 0L-1 -4L7 -5V5H-7z" fill="#8a8a8a"/><path d="M-3 3L4 -3" stroke="#f0f0f0" stroke-width="1.600"/><circle cx="0" cy="0" r="2.500" fill="none" stroke="#e0e0e0" stroke-width="0.800"/></g><g transform="translate(1034 436.5)"><path d="M-7 -4L-3 -7H3L7 -4V7H-7z" fill="#d0d0d0"/><path d="M-7 -2H7M-7 1.500H7M-7 5H7M0 -7V7" stroke="#333" stroke-width="0.900"/></g></svg><div style="left:209px;top:42px;width:364px;height:628.500px;background:linear-gradient(180deg,#8b8b92 0px,#adadb3 130px,#cfcfd4 260px,#e9e9ed 370px,#f1f1f5 440px,#f3f3f7 628px);border:1.500px solid #f4f4f6;border-bottom-width:1px"></div><svg style="left:210px;top:43px" width="362" height="626" viewBox="210 43 362 626"><defs><clipPath id="gclip"><polygon points="210,488 572,495 572,597 213,590"/></clipPath></defs><g clip-path="url(#gclip)" fill="none"><path d="M209 488.0L572 495.0M209 490.7L572 497.7M209 493.4L572 500.4M209 496.2L572 503.2M209 499.1L572 506.1M209 502.0L572 509.0M209 504.9L572 511.9M209 507.9L572 514.9M209 511.0L572 518.0M209 514.0L572 521.0M209 517.2L572 524.2M209 520.4L572 527.4M209 523.6L572 530.6M209 526.9L572 533.9M209 530.2L572 537.2M209 533.6L572 540.6M209 537.0L572 544.0M209 540.5L572 547.5M209 544.0L572 551.0M209 547.6L572 554.6M209 551.2L572 558.2M209 554.8L572 561.8M209 558.6L572 565.6M209 562.3L572 569.3M209 566.1L572 573.1M209 570.0L572 577.0M209 573.9L572 580.9M209 577.8L572 584.8M209 581.8L572 588.8M209 585.9L572 592.9M209 590.0L572 597.0" stroke="#cbcbd0" stroke-width="0.65"/><path d="M-169.8 603.4L108.8 463.3M-144.0 603.9L126.0 463.6M-118.1 604.4L143.2 464.0M-92.3 604.9L160.5 464.3M-66.5 605.4L177.7 464.6M-40.6 605.9L194.9 465.0M-14.8 606.4L212.1 465.3M11.0 606.9L229.3 465.6M36.8 607.4L246.6 466.0M62.7 607.9L263.8 466.3M88.5 608.4L281.0 466.6M114.3 608.9L298.2 467.0M140.2 609.4L315.4 467.3M166.0 609.9L332.7 467.6M191.8 610.4L349.9 468.0M217.7 610.9L367.1 468.3M243.5 611.4L384.3 468.6M269.3 611.9L401.5 469.0M295.1 612.4L418.8 469.3M321.0 612.9L436.0 469.6M346.8 613.4L453.2 470.0M372.6 613.9L470.4 470.3M398.5 614.4L487.6 470.6M424.3 614.9L504.9 471.0M450.1 615.5L522.1 471.3M475.9 616.0L539.3 471.6M501.8 616.5L556.5 472.0M527.6 617.0L573.7 472.3M553.4 617.5L591.0 472.6M579.3 618.0L608.2 473.0" stroke="#b4b4ba" stroke-width="0.6"/><path d="M209 531L572 537.500" stroke="#bcbcc2" stroke-width="0.7"/></g><defs>
<linearGradient id="slL" x1="0" y1="0" x2="1" y2="1" gradientTransform="rotate(-8)"><stop offset="0" stop-color="#ffffff"/><stop offset="0.55" stop-color="#f4f4f4"/><stop offset="1" stop-color="#c9c9cc"/></linearGradient>
<linearGradient id="bodyg" x1="0" y1="0" x2="1" y2="0"><stop offset="0" stop-color="#d4d4d6"/><stop offset="0.25" stop-color="#f6f6f6"/><stop offset="0.6" stop-color="#f0f0f0"/><stop offset="1" stop-color="#dadadc"/></linearGradient>
<linearGradient id="legg" x1="0" y1="0" x2="1" y2="0"><stop offset="0" stop-color="#5c5c5e"/><stop offset="0.45" stop-color="#7b7b7d"/><stop offset="1" stop-color="#606062"/></linearGradient>
<linearGradient id="skin" x1="0" y1="0" x2="1" y2="0"><stop offset="0" stop-color="#b8917c"/><stop offset="0.5" stop-color="#d9b49f"/><stop offset="1" stop-color="#b48b76"/></linearGradient>
<radialGradient id="face" cx="0.5" cy="0.45" r="0.6"><stop offset="0" stop-color="#dcb7a3"/><stop offset="0.7" stop-color="#c9a08b"/><stop offset="1" stop-color="#9e7966"/></radialGradient>
</defs><path d="M497 377C499 370 516 369 519 373C520 376 516 379 516 381L520 381L545 423L561 434L560 436L552 433L546 431L544 425L515 401L498 429L490 433L405 524L402 535L395 530L404 458L432.500 430L421 427.500L455 400L407 415L406 411L485 383L495 381z" fill="#bdbdc1"/><path d="M447.500 445.500L409 481L412.500 483L448 449z" fill="#ececf0"/><path d="M368 470L369 506L360 533L351 531L356 508z" fill="#bdbdc1"/><linearGradient id="shoe" x1="0" y1="0" x2="0" y2="1"><stop offset="0" stop-color="#dcdcde"/><stop offset="0.550" stop-color="#ececee"/><stop offset="1" stop-color="#c6c6ca"/></linearGradient><path d="M332 512.500C329 519 322 526 320 532C319.500 537 324 539 333 538.500C343 538 351 536.500 354.500 532.500L355 514z" fill="url(#shoe)" stroke="#b8b8bc" stroke-width="0.500"/><path d="M374.500 518C374 526 373.500 533 375 536.500C380 539.500 394 539.500 399.500 536C401 530 400.500 524 399.500 518z" fill="url(#shoe)" stroke="#b8b8bc" stroke-width="0.500"/><path d="M321 534C328 537 345 536 354 531M375.500 535C382 537.500 393 537.500 399 534.500" stroke="#b4b4b8" stroke-width="0.700" fill="none"/><path d="M336 515l6 3M334 518.500l6 3M332 522l6 3M330 525.500l5 2.500M381 521h11M381 524.500h11M381.500 528h10" stroke="#a8a8ae" stroke-width="0.700" fill="none"/><path d="M404 440C408 452 408 480 404 500z" fill="#7a2a6a"/><path d="M234 303.500L246.500 309L244.500 316L240.500 322L238 329L235 330L233.500 323L231.500 320.500L227 331L224 332.500L222.500 330.500L219.500 336L216 337L215 334.500L221 323L225.500 312z" fill="url(#skin)"/><path d="M231.500 320.500L236 312M226 322L222.500 330.500" stroke="#a98570" stroke-width="0.600" fill="none"/><g transform="translate(721.500 -1.500) scale(-1 1)"><path d="M234 303.500L246.500 309L244.500 316L240.500 322L238 329L235 330L233.500 323L231.500 320.500L227 331L224 332.500L222.500 330.500L219.500 336L216 337L215 334.500L221 323L225.500 312z" fill="url(#skin)"/><path d="M231.500 320.500L236 312M226 322L222.500 330.500" stroke="#a98570" stroke-width="0.600" fill="none"/></g><path d="M351 158L377 158L378 181L350 181z" fill="#b38b77"/><path d="M351 165C356 172 372 172 377 165L377 170C372 176 356 176 351 170z" fill="#8f6a58" opacity="0.700"/><path d="M346 140C346 128 352 122 364 122C376 122 382.500 128 382.500 140C383 150 381.500 157 378 163C374 169.500 368 172.500 364.500 172.500C361 172.500 355 169.500 351 163C347.500 157 345.500 150 346 140z" fill="url(#face)"/><path d="M346.500 146C346 152 348 159 352 164.500L353.500 160C350 155 349 150 349 146zM382 146C382.500 152 380.500 159 376.500 164.500L375.500 160C378.500 155 379.500 150 379.500 146z" fill="#8e6a58" opacity="0.550"/><path d="M345.300 146C342.500 130 348 118.500 361 117.200C374 116 384.500 123 383.600 138L382 147C381.500 140 380 135 377 132.500C370 135 357 131.500 351.500 134.500C348.500 137 347.500 141 347.300 147z" fill="#34302b"/><path d="M352 124C356 119 368 118 376 122" stroke="#4a443e" stroke-width="1.200" fill="none"/><path d="M350.500 144.500C353 143 356 143 358.500 144.500M369.500 144.500C372 143 375 143 377.500 144.500" stroke="#3e302a" stroke-width="1.100" fill="none"/><path d="M352 147.800h5M371 147.800h5" stroke="#4a5868" stroke-width="1.400"/><path d="M351.500 146.800h6M370.500 146.800h6" stroke="#3a2c28" stroke-width="0.500"/><path d="M360.800 163.200C362.500 162.300 365.500 162.300 367.200 163.200C365.500 165 362.500 165 360.800 163.200z" fill="#a8585a"/><path d="M362.500 149L361.500 156.500L364 157.500L366 156.500" stroke="#a67e6a" stroke-width="0.900" fill="none"/><path d="M322 226L318 260L313.500 295L309.500 330L328 330L324 260z" fill="#4a3f3a"/><path d="M400 222L408 240L414 270L420 322L420 330L391 330L399 260z" fill="#2e2a2c"/><path d="M324 328L364 328L362 380L359 430L357 470L356 514L332 514L330 470L328 420L325 370z" fill="url(#legg)"/><path d="M363 328L388 328L372 385L366 395L362 372z" fill="#c9a58e"/><path d="M363 328L380 328L372 350L363 346z" fill="#3c3c3e"/><path d="M338 330L337 420L340 514" stroke="#c03050" stroke-width="0.7" fill="none"/><path d="M325 352C340 355 355 355 363 354M326 372C340 376 355 376 362 375M345 330L344 400M358 330C357 400 356 460 356 514M329 430C340 432 352 430 358 428M333 514C340 517 350 517 356 514" stroke="#7d7ddd" stroke-width="0.7" fill="none"/><path d="M393 308L409 308L408 360L406 420L404 470L402 518L369 518L368 470L367 430L367 390L376 355L385 328z" fill="#85853f" stroke="#ffff00" stroke-width="2"/><path d="M385.500 326L385 430L384 518" stroke="#ffff00" stroke-width="3" fill="none"/><path d="M386 337H406M386 341.500H406M386 354.500H407M368 428.500H405M370 513H402M405.500 310L403.500 346" stroke="#ffff00" stroke-width="1.6" fill="none"/><path d="M338 171L334 167.500L233 302L245 310L323 229L330 200L341 179z" fill="url(#slL)"/><path d="M389 165L393 160L488 299L477 306L403 232L397 199z" fill="url(#slL)" transform="translate(781 0) scale(-1 1)" style="display:none"/><linearGradient id="slR" x1="1" y1="0" x2="0" y2="1" gradientTransform="rotate(8)"><stop offset="0" stop-color="#ffffff"/><stop offset="0.55" stop-color="#f4f4f4"/><stop offset="1" stop-color="#c4c4c8"/></linearGradient><path d="M388 167L393 160L488 299L477 306L402 232L398 205L386 180z" fill="url(#slR)"/><path d="M321.0 232.0H326.0M320.7 234.8H326.0M320.4 237.5H326.0M320.1 240.2H326.0M319.8 243.0H326.0M319.4 245.8H326.0M319.1 248.5H326.0M318.8 251.2H326.0M318.5 254.0H326.0" stroke="#e05030" stroke-width="0.9" fill="none"/><path d="M318.0 258.0H326.0M317.6 261.0H326.2M317.2 264.0H326.3M316.9 267.0H326.5M316.5 270.0H326.7M316.1 273.0H326.8M315.8 276.0H327.0M315.4 279.0H327.2M315.0 282.0H327.3M314.6 285.0H327.5M314.2 288.0H327.7M313.9 291.0H327.8M313.5 294.0H328.0" stroke="#4a6ae0" stroke-width="0.9" fill="none"/><path d="M313.0 298.0H328.0M312.6 301.0H328.2M312.3 304.0H328.4M311.9 307.0H328.6M311.6 310.0H328.8M311.2 313.0H329.0M310.9 316.0H329.2M310.6 319.0H329.4M310.2 322.0H329.6M309.9 325.0H329.8M309.5 328.0H330.0" stroke="#e08a30" stroke-width="0.9" fill="none"/><path d="M396.0 234.0H406.0M396.0 237.1H406.7M396.0 240.3H407.4M396.0 243.4H408.1M396.0 246.6H408.9M396.0 249.7H409.6M396.0 252.9H410.3M396.0 256.0H411.0" stroke="#1f7a4a" stroke-width="0.9" fill="none"/><path d="M396.0 260.0H412.0M395.8 263.1H412.4M395.6 266.2H412.8M395.5 269.3H413.2M395.3 272.4H413.6M395.1 275.5H414.0M394.9 278.5H414.5M394.7 281.6H414.9M394.5 284.7H415.3M394.4 287.8H415.7M394.2 290.9H416.1M394.0 294.0H416.5" stroke="#3a5ee0" stroke-width="0.9" fill="none"/><path d="M394.0 298.0H417.0M393.7 301.3H417.3M393.3 304.7H417.7M393.0 308.0H418.0M392.7 311.3H418.3M392.3 314.7H418.7M392.0 318.0H419.0M391.7 321.3H419.3M391.3 324.7H419.7M391.0 328.0H420.0" stroke="#b03048" stroke-width="0.9" fill="none"/><path d="M342 181C350 192 372 192 378.500 181C384 184 393 197 397 208C400 216 401.500 224 401 232L399 262L396 300L392 328L327 328L325 300L322 262L321 228C322 218 327 204 333 195C336 190 339 185 342 181z" fill="url(#bodyg)"/><path d="M347.500 176C354 181.500 374 181.500 381 176" stroke="#7a5a44" stroke-width="1.6" fill="none"/><path d="M347.0 181.0l-2.5 7.5M348.6 181.0l-2.5 7.5M350.2 181.0l-2.5 7.5M351.9 181.0l-2.5 7.5M353.5 181.0l-2.5 7.5M355.1 181.0l-2.5 7.5M356.7 181.0l-2.5 7.5M358.3 181.0l-2.5 7.5M360.0 181.0l-2.5 7.5M361.6 181.0l-2.5 7.5M363.2 181.0l-2.5 7.5M364.8 181.0l-2.5 7.5M366.4 181.0l-2.5 7.5M368.0 181.0l-2.5 7.5M369.7 181.0l-2.5 7.5M371.3 181.0l-2.5 7.5M372.9 181.0l-2.5 7.5M374.5 181.0l-2.5 7.5M376.1 181.0l-2.5 7.5M377.8 181.0l-2.5 7.5M379.4 181.0l-2.5 7.5M381.0 181.0l-2.5 7.5" stroke="#c8524a" stroke-width="0.8" fill="none"/><path d="M348.0 180.0l-2.5 7.0M349.7 180.5l-2.5 7.0M351.3 181.0l-2.5 7.0M353.0 181.5l-2.5 7.0M354.7 182.0l-2.5 7.0M356.3 182.5l-2.5 7.0M358.0 183.0l-2.5 7.0" stroke="#3fa060" stroke-width="0.8" fill="none"/><path d="M336.0 168.0l-6.0 10.0M337.5 169.2l-6.0 10.0M339.0 170.5l-6.0 10.0M340.5 171.8l-6.0 10.0M342.0 173.0l-6.0 10.0M343.5 174.2l-6.0 10.0M345.0 175.5l-6.0 10.0M346.5 176.8l-6.0 10.0M348.0 178.0l-6.0 10.0" stroke="#d040b0" stroke-width="0.9" fill="none"/><path d="M338.0 166.0l3.0 3.0M339.8 167.2l3.0 3.0M341.6 168.4l3.0 3.0M343.4 169.6l3.0 3.0M345.2 170.8l3.0 3.0M347.0 172.0l3.0 3.0" stroke="#20a8e0" stroke-width="1.6" fill="none"/><path d="M339.0 184.0l3.0 -5.0M336.6 188.2l3.0 -5.0M334.2 192.4l3.0 -5.0M331.8 196.6l3.0 -5.0M329.4 200.8l3.0 -5.0M327.0 205.0l3.0 -5.0" stroke="#c050b0" stroke-width="0.8" fill="none"/><path d="M326.0 207.0l3.0 -5.0M325.2 211.2l3.0 -5.0M324.4 215.4l3.0 -5.0M323.6 219.6l3.0 -5.0M322.8 223.8l3.0 -5.0M322.0 228.0l3.0 -5.0" stroke="#5a6ad8" stroke-width="0.8" fill="none"/><path d="M381.0 176.0l5.0 9.0M382.6 173.7l5.0 9.0M384.1 171.4l5.0 9.0M385.7 169.1l5.0 9.0M387.3 166.9l5.0 9.0M388.9 164.6l5.0 9.0M390.4 162.3l5.0 9.0M392.0 160.0l5.0 9.0" stroke="#18b040" stroke-width="0.9" fill="none"/><path d="M388.0 160.0l3.0 5.0M389.7 159.0l3.0 5.0M391.3 158.0l3.0 5.0M393.0 157.0l3.0 5.0" stroke="#f07050" stroke-width="1.2" fill="none"/><path d="M386.0 178.0l5.0 -7.0M387.0 180.0l5.0 -7.0M388.0 182.0l5.0 -7.0M389.0 184.0l5.0 -7.0M390.0 186.0l5.0 -7.0M391.0 188.0l5.0 -7.0M392.0 190.0l5.0 -7.0M393.0 192.0l5.0 -7.0M394.0 194.0l5.0 -7.0M395.0 196.0l5.0 -7.0M396.0 198.0l5.0 -7.0M397.0 200.0l5.0 -7.0" stroke="#b87060" stroke-width="0.8" fill="none"/><path d="M241 309.500L246.800 311L323.500 230.500L321 227.500z" fill="#5c4b45"/><path d="M246.5 309.5l-3.8 -2.6M248.4 307.4l-3.8 -2.6M250.4 305.4l-3.8 -2.6M252.3 303.4l-3.8 -2.6M254.3 301.3l-3.8 -2.6M256.2 299.2l-3.8 -2.6M258.2 297.2l-3.8 -2.6M260.1 295.1l-3.8 -2.6M262.1 293.1l-3.8 -2.6M264.1 291.1l-3.8 -2.6M266.0 289.0l-3.8 -2.6" stroke="#2aa4d8" stroke-width="1.1" fill="none"/><path d="M268.0 287.0l-3.8 -2.6M269.9 285.0l-3.8 -2.6M271.7 283.1l-3.8 -2.6M273.6 281.1l-3.8 -2.6M275.4 279.1l-3.8 -2.6M277.3 277.2l-3.8 -2.6M279.2 275.2l-3.8 -2.6M281.0 273.2l-3.8 -2.6M282.9 271.3l-3.8 -2.6M284.8 269.3l-3.8 -2.6M286.6 267.3l-3.8 -2.6M288.5 265.4l-3.8 -2.6M290.3 263.4l-3.8 -2.6M292.2 261.4l-3.8 -2.6M294.1 259.5l-3.8 -2.6M295.9 257.5l-3.8 -2.6M297.8 255.6l-3.8 -2.6M299.7 253.6l-3.8 -2.6M301.5 251.6l-3.8 -2.6M303.4 249.7l-3.8 -2.6M305.2 247.7l-3.8 -2.6M307.1 245.7l-3.8 -2.6M309.0 243.8l-3.8 -2.6M310.8 241.8l-3.8 -2.6M312.7 239.8l-3.8 -2.6M314.6 237.9l-3.8 -2.6M316.4 235.9l-3.8 -2.6M318.3 233.9l-3.8 -2.6M320.1 232.0l-3.8 -2.6M322.0 230.0l-3.8 -2.6" stroke="#b274a8" stroke-width="0.9" fill="none"/><path d="M326 200L330 197L329 222L324 228z" fill="#d2ab94"/><path d="M398 200C402 215 404 225 403 233" stroke="#d05050" stroke-width="0.8" fill="none"/><circle cx="378" cy="364" r="53" fill="none" stroke="#2828f0" stroke-width="0.9"/><path d="M325 366A53 17 0 0 0 431 366" fill="none" stroke="#30e030" stroke-width="0.9"/><path d="M378 311A14 53 0 0 0 378 417" fill="none" stroke="#f02020" stroke-width="0.9"/><path d="M378 364V318" stroke="#20e020" stroke-width="1"/><path d="M378 311l-3.200 7h6.400z" fill="#20e020"/><path d="M378 364H424" stroke="#f02020" stroke-width="1"/><path d="M431 364l-7 -3.200v6.400z" fill="#f02020"/><path d="M378 364L367 379" stroke="#2020f0" stroke-width="1"/><ellipse cx="367" cy="379" rx="3" ry="2.500" fill="#1010f0"/><circle cx="378" cy="364" r="2.200" fill="#1010e0"/><g stroke="#5a5aa0" stroke-width="0.7" fill="none"><circle cx="425" cy="314" r="3.800"/><circle cx="425" cy="314" r="1.800"/><path d="M425 308.500v11M419.500 314h11"/></g><rect x="217" y="50" width="21" height="43.500" rx="5" fill="#3e3e42"/><rect x="217" y="98" width="21" height="64" rx="5" fill="#3e3e42"/><rect x="217" y="166" width="21" height="84" rx="5" fill="#3e3e42"/><path d="M227.500 56L233 58.500V64.500L227.500 67L222 64.500V58.500z" fill="#b4b4b4"/><path d="M227.500 56L233 58.500L227.500 61L222 58.500z" fill="#dcdcdc"/><path d="M227.500 61L233 58.500V64.500L227.500 67z" fill="#8c8c8c"/><circle cx="222" cy="67" r="1.200" fill="#cfcfcf"/><path d="M222 79l3 -2.300c1.200 1 3.800 1 5 0l3 2.300l-1.800 2.600l-1.400 -0.800v6.200h-4.600v-6.200l-1.400 0.800z" fill="#8a8a8c"/><circle cx="222" cy="88" r="1.100" fill="#b0b0b0"/><path d="M222 106.5l3 -2.300c1.200 1 3.800 1 5 0l3 2.300l-1.800 2.600l-1.400 -0.800v6.200h-4.600v-6.200l-1.400 0.800z" fill="#f4f4f4" transform="translate(-34.100 -16) scale(1.150)"/><circle cx="224" cy="130" r="2.600" fill="#e8e8e8"/><path d="M229 127l3.500 2v4.500h-5v-4.500z" fill="#e0e0e0"/><path d="M225 128l6 -4" stroke="#d0d0d0" stroke-width="0.800"/><circle cx="227.500" cy="146.500" r="3.600" fill="#f0f0f0"/><path d="M221.500 156c0.500 -4 3 -5 6 -5s5.500 1 6 5z" fill="#f0f0f0"/><path d="M224 172.500l8 -1.500l-2 8.500l-8 1.500z" fill="#1e8cf0"/><path d="M222 175v6.500l7 0.500" fill="none" stroke="#dcdcdc" stroke-width="1.200"/><path d="M224 193l8 -1.500l-2 8.500l-8 1.500z" fill="#18181a"/><path d="M224 193l8 -1.500l-5 5z" fill="#77777a"/><circle cx="227.500" cy="216" r="3.800" fill="#f2cfb0"/><path d="M223 224c1 -2.500 2.500 -3 4.500 -3s3.500 0.500 4.500 3z" fill="#e8b890"/><g fill="none" stroke="#e4e4e4" stroke-width="0.800"><circle cx="227.500" cy="238" r="5"/><ellipse cx="227.500" cy="238" rx="2.300" ry="5"/><path d="M222.500 238h10M223.300 235.500h8.400M223.300 240.500h8.400M227.500 233v10"/></g></svg><div style="left:185px;top:384px;width:94px;height:42px;background:#121214;border-radius:3px"></div><span class="t" style="left:190px;top:391.500px;font-size:7px;color:#e6e6e6;letter-spacing:-0.300px">시뮬레이션 전 상태로 재배치</span><div style="left:191px;top:405px;width:42px;height:15px;background:#242427;border-radius:7.500px"></div><div style="left:237px;top:405px;width:37px;height:15px;background:#242427;border-radius:7.500px"></div><svg style="left:194px;top:409px" width="7" height="7" viewBox="0 0 7 7"><path d="M0.500 1l3 0.800l3 -0.800v4.500l-3 0.800l-3 -0.800z" fill="#d8d8d8"/><path d="M3.500 1.800v4.500" stroke="#242427" stroke-width="0.700"/></svg><span class="t" style="left:203px;top:408.500px;font-size:8px;color:#e0e0e0">Manual</span><svg style="left:240px;top:409px" width="8" height="7" viewBox="0 0 8 7"><rect x="0.500" y="1" width="5" height="5" rx="1" fill="#d8d8d8"/><path d="M5.500 3l2 -1.500v4l-2 -1.500z" fill="#d8d8d8"/><circle cx="3" cy="3.500" r="1" fill="#242427"/></svg><span class="t" style="left:249.500px;top:408.500px;font-size:8px;color:#e0e0e0">Video</span><div style="left:577px;top:42.5px;width:417px;height:627px;background:#c8c8c8;border:1px solid #dcdcdc"></div><svg style="left:578px;top:43.5px" width="415" height="625" viewBox="578 43.5 415 625"><path d="M585.1 43V670M595.9 43V670M606.7 43V670M617.5 43V670M628.3 43V670M639.1 43V670M649.9 43V670M660.7 43V670M671.5 43V670M682.3 43V670M693.1 43V670M703.9 43V670M714.7 43V670M725.5 43V670M736.3 43V670M747.1 43V670M757.9 43V670M768.7 43V670M779.5 43V670M790.3 43V670M801.1 43V670M811.9 43V670M822.7 43V670M833.5 43V670M844.3 43V670M855.1 43V670M865.9 43V670M876.7 43V670M887.5 43V670M898.3 43V670M909.1 43V670M919.9 43V670M930.7 43V670M941.5 43V670M952.3 43V670M963.1 43V670M973.9 43V670M984.7 43V670M578 53.6H994M578 64.4H994M578 75.1H994M578 85.9H994M578 96.7H994M578 107.5H994M578 118.3H994M578 129.0H994M578 139.8H994M578 150.6H994M578 161.4H994M578 172.2H994M578 182.9H994M578 193.7H994M578 204.5H994M578 215.3H994M578 226.1H994M578 236.8H994M578 247.6H994M578 258.4H994M578 269.2H994M578 280.0H994M578 290.7H994M578 301.5H994M578 312.3H994M578 323.1H994M578 333.9H994M578 344.6H994M578 355.4H994M578 366.2H994M578 377.0H994M578 387.8H994M578 398.5H994M578 409.3H994M578 420.1H994M578 430.9H994M578 441.7H994M578 452.4H994M578 463.2H994M578 474.0H994M578 484.8H994M578 495.6H994M578 506.3H994M578 517.1H994M578 527.9H994M578 538.7H994M578 549.5H994M578 560.2H994M578 571.0H994M578 581.8H994M578 592.6H994M578 603.4H994M578 614.1H994M578 624.9H994M578 635.7H994M578 646.5H994M578 657.3H994M578 668.0H994" stroke="#bebebe" stroke-width="0.8" fill="none"/><path d="M779.5 43V670M578 366.500H994" stroke="#a8a8a8" stroke-width="0.8" fill="none"/><g fill="#bdbdbd"><ellipse cx="779" cy="169" rx="9.500" ry="10"/><path d="M775 176h8v5l12 4l8 12l24 66l-3 3l-24 -50l-4 -6l-2 36l2 30l-2 40l-3 60l1 14h-9l-2 -70l-2 -56l-2 56l-2 70h-9l1 -14l-3 -60l-2 -40l2 -30l-2 -36l-4 6l-24 50l-3 -3l24 -66l8 -12l12 -4z"/></g><rect x="584" y="49" width="21" height="104" rx="5" fill="#4a4a4d"/><path d="M588.500 66L599 57.500L600 58.500z" fill="#e0e0e0"/><path d="M598 57.500c2 -0.500 2 3 2.500 5" stroke="#2a8af0" stroke-width="0.900" fill="none"/><path d="M588.5 79l3.300 -2.500c1.300 1.100 4.100 1.100 5.400 0l3.300 2.500l-2 2.800l-1.500 -0.900v6.800h-5v-6.800l-1.500 0.900z" fill="#f4f4f4"/><circle cx="594.500" cy="102" r="5.500" fill="#e4e4e8"/><text x="594.500" y="105.500" font-size="9" font-style="italic" font-weight="bold" text-anchor="middle" fill="#2a6af0" font-family="Liberation Serif,serif">i</text><path d="M591.500 118.500l8 -1.500l-2 8l-8 1.500z" fill="#1e8cf0"/><path d="M589.500 121v6l7 0.500" fill="none" stroke="#dcdcdc" stroke-width="1.200"/><path d="M588.5 139.5l3.300 -2.500c1.300 1.100 4.100 1.100 5.400 0l3.300 2.500l-2 2.800l-1.500 -0.900v6.800h-5v-6.800l-1.500 0.900z" fill="#f4f4f4"/><rect x="589" y="144" width="4" height="3.500" fill="#2a7af0"/><path d="M721 180L725 183L731 184.500L744.500 210L735.500 267L712 267L704 210z" fill="none" stroke="#66a6e0" stroke-width="5" stroke-linejoin="round"/><path d="M721 180L725 183L731 184.500L744.500 210L735.500 267L712 267L704 210z" fill="#ffffff" stroke="#55557a" stroke-width="0.6"/><path d="M770 185.500C773 190 776 191 779 191C782 191 785 190 788.500 185.500C797 190 803 200 807 209.500L796 257L762.700 257L751.800 209.500C756 200 762 190 770 185.500z" fill="#ffffff" stroke="#55557a" stroke-width="0.6"/><path d="M762.700 259H796" stroke="#8a8ab0" stroke-width="0.6" stroke-dasharray="1.500 1.500"/><path d="M834 180L830 183L825 184.500L811 210L819.500 267L842.700 267L851 210z" fill="none" stroke="#66a6e0" stroke-width="5" stroke-linejoin="round"/><path d="M834 180L830 183L825 184.500L811 210L819.500 267L842.700 267L851 210z" fill="#ffffff" stroke="#55557a" stroke-width="0.6"/><path d="M744 224H752M807 224H812" stroke="#66a6e0" stroke-width="0.8"/><path d="M882 182L896.700 182C908 190 914 200 917 209.500C923 225 926 240 928 257.300L851.500 257.300C853 240 857 225 861.800 209.500C866 200 872 190 882 182z" fill="#6a6a6a" stroke="#444" stroke-width="0.5"/><path d="M861.800 212V257M917 212V257M851.500 259.500H928" stroke="#8080c0" stroke-width="0.6" stroke-dasharray="1.500 1.500" fill="none"/><path d="M768 172H790.500" stroke="#6b4f3f" stroke-width="2"/><path d="M874.500 171H904.500" stroke="#6b4f3f" stroke-width="2"/><rect x="723" y="301" width="82.500" height="5" fill="#6a5252" stroke="#3c2c2c" stroke-width="0.6"/><path d="M717.0 191.0L722.0 193.0M722.8 191.0L721.2 195.0" stroke="#f02020" stroke-width="0.9" fill="none"/><path d="M718.0 188.0L722.0 186.0M721.0 184.0L723.0 188.0" stroke="#f02020" stroke-width="0.9" fill="none"/><path d="M728.0 197.0L734.0 195.0M733.3 192.9L734.7 197.1" stroke="#f02020" stroke-width="0.9" fill="none"/><path d="M711.0 204.0L716.0 207.0M717.1 205.1L714.9 208.9" stroke="#f02020" stroke-width="0.9" fill="none"/><path d="M733.0 210.0L739.0 207.0M738.0 205.0L740.0 209.0" stroke="#f02020" stroke-width="0.9" fill="none"/><path d="M711.0 251.0L717.0 251.0M717.0 248.8L717.0 253.2" stroke="#f02020" stroke-width="0.9" fill="none"/><path d="M732.0 251.0L738.0 251.0M738.0 248.8L738.0 253.2" stroke="#f02020" stroke-width="0.9" fill="none"/><path d="M838.0 191.0L833.0 193.0M833.8 195.0L832.2 191.0" stroke="#f02020" stroke-width="0.9" fill="none"/><path d="M837.0 188.0L833.0 186.0M832.0 188.0L834.0 184.0" stroke="#f02020" stroke-width="0.9" fill="none"/><path d="M827.0 197.0L821.0 195.0M820.3 197.1L821.7 192.9" stroke="#f02020" stroke-width="0.9" fill="none"/><path d="M844.0 204.0L839.0 207.0M840.1 208.9L837.9 205.1" stroke="#f02020" stroke-width="0.9" fill="none"/><path d="M822.0 210.0L816.0 207.0M815.0 209.0L817.0 205.0" stroke="#f02020" stroke-width="0.9" fill="none"/><path d="M844.0 251.0L838.0 251.0M838.0 253.2L838.0 248.8" stroke="#f02020" stroke-width="0.9" fill="none"/><path d="M823.0 251.0L817.0 251.0M817.0 253.2L817.0 248.8" stroke="#f02020" stroke-width="0.9" fill="none"/><path d="M763.0 194.0L768.0 197.0M769.1 195.1L766.9 198.9" stroke="#f02020" stroke-width="0.9" fill="none"/><path d="M757.0 206.0L763.0 209.0M764.0 207.0L762.0 211.0" stroke="#f02020" stroke-width="0.9" fill="none"/><path d="M756.0 224.0L762.0 223.0M761.6 220.8L762.4 225.2" stroke="#f02020" stroke-width="0.9" fill="none"/><path d="M760.0 240.0L766.0 239.0M765.6 236.8L766.4 241.2" stroke="#f02020" stroke-width="0.9" fill="none"/><path d="M796.0 194.0L791.0 197.0M792.1 198.9L789.9 195.1" stroke="#f02020" stroke-width="0.9" fill="none"/><path d="M802.0 206.0L796.0 209.0M797.0 211.0L795.0 207.0" stroke="#f02020" stroke-width="0.9" fill="none"/><path d="M803.0 224.0L797.0 223.0M796.6 225.2L797.4 220.8" stroke="#f02020" stroke-width="0.9" fill="none"/><path d="M799.0 240.0L793.0 239.0M792.6 241.2L793.4 236.8" stroke="#f02020" stroke-width="0.9" fill="none"/><path d="M874.0 190.0L879.0 194.0M880.4 192.3L877.6 195.7" stroke="#f02020" stroke-width="0.9" fill="none"/><path d="M868.0 204.0L874.0 206.0M874.7 203.9L873.3 208.1" stroke="#f02020" stroke-width="0.9" fill="none"/><path d="M859.0 226.0L864.0 227.0M864.4 224.8L863.6 229.2" stroke="#f02020" stroke-width="0.9" fill="none"/><path d="M855.0 242.0L860.0 243.0M860.4 240.8L859.6 245.2" stroke="#f02020" stroke-width="0.9" fill="none"/><path d="M904.0 190.0L899.0 194.0M900.4 195.7L897.6 192.3" stroke="#f02020" stroke-width="0.9" fill="none"/><path d="M911.0 204.0L905.0 206.0M905.7 208.1L904.3 203.9" stroke="#f02020" stroke-width="0.9" fill="none"/><path d="M920.0 226.0L915.0 227.0M915.4 229.2L914.6 224.8" stroke="#f02020" stroke-width="0.9" fill="none"/><path d="M924.0 242.0L919.0 243.0M919.4 245.2L918.6 240.8" stroke="#f02020" stroke-width="0.9" fill="none"/><circle cx="721" cy="180" r="1.6" fill="#b8c820" stroke="#55601a" stroke-width="0.5"/><circle cx="725" cy="183" r="1.6" fill="#b8c820" stroke="#55601a" stroke-width="0.5"/><circle cx="731" cy="184.5" r="1.6" fill="#b8c820" stroke="#55601a" stroke-width="0.5"/><circle cx="744.5" cy="210" r="1.6" fill="#b8c820" stroke="#55601a" stroke-width="0.5"/><circle cx="735.5" cy="267" r="1.6" fill="#b8c820" stroke="#55601a" stroke-width="0.5"/><circle cx="712" cy="267" r="1.6" fill="#b8c820" stroke="#55601a" stroke-width="0.5"/><circle cx="704" cy="210" r="1.6" fill="#b8c820" stroke="#55601a" stroke-width="0.5"/><circle cx="834" cy="180" r="1.6" fill="#b8c820" stroke="#55601a" stroke-width="0.5"/><circle cx="830" cy="183" r="1.6" fill="#b8c820" stroke="#55601a" stroke-width="0.5"/><circle cx="825" cy="184.5" r="1.6" fill="#b8c820" stroke="#55601a" stroke-width="0.5"/><circle cx="811" cy="210" r="1.6" fill="#b8c820" stroke="#55601a" stroke-width="0.5"/><circle cx="819.5" cy="267" r="1.6" fill="#b8c820" stroke="#55601a" stroke-width="0.5"/><circle cx="842.7" cy="267" r="1.6" fill="#b8c820" stroke="#55601a" stroke-width="0.5"/><circle cx="851" cy="210" r="1.6" fill="#b8c820" stroke="#55601a" stroke-width="0.5"/><circle cx="770" cy="185.5" r="1.6" fill="#b8c820" stroke="#55601a" stroke-width="0.5"/><circle cx="779" cy="191" r="1.6" fill="#b8c820" stroke="#55601a" stroke-width="0.5"/><circle cx="788.5" cy="185.5" r="1.6" fill="#b8c820" stroke="#55601a" stroke-width="0.5"/><circle cx="807" cy="209.5" r="1.6" fill="#b8c820" stroke="#55601a" stroke-width="0.5"/><circle cx="796" cy="257" r="1.6" fill="#b8c820" stroke="#55601a" stroke-width="0.5"/><circle cx="779" cy="257" r="1.6" fill="#b8c820" stroke="#55601a" stroke-width="0.5"/><circle cx="762.7" cy="257" r="1.6" fill="#b8c820" stroke="#55601a" stroke-width="0.5"/><circle cx="751.8" cy="209.5" r="1.6" fill="#b8c820" stroke="#55601a" stroke-width="0.5"/><circle cx="755" cy="225.5" r="1.6" fill="#b8c820" stroke="#55601a" stroke-width="0.5"/><circle cx="759" cy="241" r="1.6" fill="#b8c820" stroke="#55601a" stroke-width="0.5"/><circle cx="803.5" cy="225.5" r="1.6" fill="#b8c820" stroke="#55601a" stroke-width="0.5"/><circle cx="799.5" cy="241" r="1.6" fill="#b8c820" stroke="#55601a" stroke-width="0.5"/><circle cx="882" cy="182" r="1.6" fill="#b8c820" stroke="#55601a" stroke-width="0.5"/><circle cx="889.5" cy="182.5" r="1.6" fill="#b8c820" stroke="#55601a" stroke-width="0.5"/><circle cx="896.7" cy="182" r="1.6" fill="#b8c820" stroke="#55601a" stroke-width="0.5"/><circle cx="917" cy="209.5" r="1.6" fill="#b8c820" stroke="#55601a" stroke-width="0.5"/><circle cx="920.5" cy="225.5" r="1.6" fill="#b8c820" stroke="#55601a" stroke-width="0.5"/><circle cx="924" cy="241" r="1.6" fill="#b8c820" stroke="#55601a" stroke-width="0.5"/><circle cx="928" cy="257.3" r="1.6" fill="#b8c820" stroke="#55601a" stroke-width="0.5"/><circle cx="917" cy="257.3" r="1.6" fill="#b8c820" stroke="#55601a" stroke-width="0.5"/><circle cx="889.5" cy="257.3" r="1.6" fill="#b8c820" stroke="#55601a" stroke-width="0.5"/><circle cx="861.8" cy="257.3" r="1.6" fill="#b8c820" stroke="#55601a" stroke-width="0.5"/><circle cx="851.5" cy="257.3" r="1.6" fill="#b8c820" stroke="#55601a" stroke-width="0.5"/><circle cx="854.5" cy="241" r="1.6" fill="#b8c820" stroke="#55601a" stroke-width="0.5"/><circle cx="858.5" cy="225.5" r="1.6" fill="#b8c820" stroke="#55601a" stroke-width="0.5"/><circle cx="861.8" cy="209.5" r="1.6" fill="#b8c820" stroke="#55601a" stroke-width="0.5"/><circle cx="768" cy="172" r="1.6" fill="#b8c820" stroke="#55601a" stroke-width="0.5"/><circle cx="779" cy="172.5" r="1.6" fill="#b8c820" stroke="#55601a" stroke-width="0.5"/><circle cx="790.5" cy="172" r="1.6" fill="#b8c820" stroke="#55601a" stroke-width="0.5"/><circle cx="874.5" cy="171" r="1.6" fill="#b8c820" stroke="#55601a" stroke-width="0.5"/><circle cx="889.5" cy="171.5" r="1.6" fill="#b8c820" stroke="#55601a" stroke-width="0.5"/><circle cx="904.5" cy="171" r="1.6" fill="#b8c820" stroke="#55601a" stroke-width="0.5"/><circle cx="723" cy="303.5" r="2" fill="#7ac030" stroke="#3a6a1a" stroke-width="0.5"/><circle cx="805.5" cy="303.5" r="2" fill="#7ac030" stroke="#3a6a1a" stroke-width="0.5"/><circle cx="744" cy="305.5" r="2" fill="#7ac030" stroke="#3a6a1a" stroke-width="0.5"/><path d="M745 342.500L772.500 342.500L774 355L776 365L771.800 401L770.500 446L751 446L750 401L745.500 361z" fill="#636363" stroke="#444" stroke-width="0.5"/><path d="M761 343V446" stroke="#d04040" stroke-width="1"/><path d="M751 446H761" stroke="#d04040" stroke-width="1"/><path d="M746 358H775M746 365H776M750 401H772" stroke="#8080c8" stroke-width="0.5" stroke-dasharray="1.500 1.500"/><rect x="748" y="358" width="4" height="5" fill="#e02020"/><path d="M790 342.500L817.500 342.500L817.500 361L812.500 401L811 446L791 446L790 401L785 365L788 355z" fill="#636363" stroke="#ffff20" stroke-width="1.400"/><path d="M801 343V446" stroke="#ffff20" stroke-width="1.800"/><path d="M790 343L792 352L789 358M813 343L815 355L817 361" stroke="#ffff20" stroke-width="1" fill="none"/><path d="M786 358H817M786 365H817M790 401H812" stroke="#8080c8" stroke-width="0.500" stroke-dasharray="1.500 1.500"/><rect x="811" y="358" width="4" height="5" fill="#e02020"/><circle cx="797.500" cy="369.500" r="2" fill="#1010f0"/><path d="M822.500 344L832 338L850 336L855 355C860 362 865 365 869.500 366C874 365 879 362 884.500 355L888.800 336L906 338L917 344L912 361L904.500 401L902.500 446L880.500 446L878 401C877 385 873 372 869.500 366C866 372 862 385 861 401L858.800 446L836.800 446L834.500 401L827 361z" fill="none" stroke="#66a6e0" stroke-width="5.500" stroke-linejoin="round"/><path d="M822.500 344L832 338L850 336L855 355C860 362 865 365 869.500 366C874 365 879 362 884.500 355L888.800 336L906 338L917 344L912 361L904.500 401L902.500 446L880.500 446L878 401C877 385 873 372 869.500 366C866 372 862 385 861 401L858.800 446L836.800 446L834.500 401L827 361z" fill="#636363" stroke="#4a4a4a" stroke-width="0.500"/><path d="M869.500 366C873 372 877 385 878 401M869.500 366C866 372 862 385 861 401" stroke="#30b040" stroke-width="1.200" fill="none"/><path d="M826 358L855 355M884 355L913 358M827 372H912M834 401H861M878 401H905M847 340V446M892 340V446" stroke="#8080c8" stroke-width="0.500" stroke-dasharray="1.500 1.500" fill="none"/><path d="M861 392H878" stroke="#4a6ab0" stroke-width="0.800"/><path d="M836 341l3 3M841 339l2 4M845 341l4 -3M893 341l3 3M900 339l-2 4M905 341l4 2M828 361l4 -1M911 361l-4 -1" stroke="#f02020" stroke-width="1.200"/><circle cx="745" cy="342.5" r="1.8" fill="#78b830" stroke="#3a6a1a" stroke-width="0.5"/><circle cx="749" cy="342.5" r="1.8" fill="#78b830" stroke="#3a6a1a" stroke-width="0.5"/><circle cx="761" cy="342.5" r="1.8" fill="#78b830" stroke="#3a6a1a" stroke-width="0.5"/><circle cx="768" cy="342.5" r="1.8" fill="#78b830" stroke="#3a6a1a" stroke-width="0.5"/><circle cx="772.5" cy="342.5" r="1.8" fill="#78b830" stroke="#3a6a1a" stroke-width="0.5"/><circle cx="773" cy="358" r="1.8" fill="#78b830" stroke="#3a6a1a" stroke-width="0.5"/><circle cx="776" cy="365" r="1.8" fill="#78b830" stroke="#3a6a1a" stroke-width="0.5"/><circle cx="771.8" cy="401" r="1.8" fill="#78b830" stroke="#3a6a1a" stroke-width="0.5"/><circle cx="770.5" cy="446" r="1.8" fill="#78b830" stroke="#3a6a1a" stroke-width="0.5"/><circle cx="761" cy="446" r="1.8" fill="#78b830" stroke="#3a6a1a" stroke-width="0.5"/><circle cx="751" cy="446" r="1.8" fill="#78b830" stroke="#3a6a1a" stroke-width="0.5"/><circle cx="750" cy="401" r="1.8" fill="#78b830" stroke="#3a6a1a" stroke-width="0.5"/><circle cx="745.5" cy="361" r="1.8" fill="#78b830" stroke="#3a6a1a" stroke-width="0.5"/><circle cx="790" cy="342.5" r="2.4" fill="#ffff20" stroke="#c8c800" stroke-width="0.5"/><circle cx="794" cy="342.5" r="2.4" fill="#ffff20" stroke="#c8c800" stroke-width="0.5"/><circle cx="801" cy="342.5" r="2.4" fill="#ffff20" stroke="#c8c800" stroke-width="0.5"/><circle cx="812" cy="342.5" r="2.4" fill="#ffff20" stroke="#c8c800" stroke-width="0.5"/><circle cx="817.5" cy="342.5" r="2.4" fill="#ffff20" stroke="#c8c800" stroke-width="0.5"/><circle cx="817.5" cy="361" r="2.4" fill="#ffff20" stroke="#c8c800" stroke-width="0.5"/><circle cx="812.5" cy="401" r="2.4" fill="#ffff20" stroke="#c8c800" stroke-width="0.5"/><circle cx="811" cy="446" r="2.4" fill="#ffff20" stroke="#c8c800" stroke-width="0.5"/><circle cx="801" cy="446" r="2.4" fill="#ffff20" stroke="#c8c800" stroke-width="0.5"/><circle cx="791" cy="446" r="2.4" fill="#ffff20" stroke="#c8c800" stroke-width="0.5"/><circle cx="790" cy="401" r="2.4" fill="#ffff20" stroke="#c8c800" stroke-width="0.5"/><circle cx="785" cy="365" r="2.4" fill="#ffff20" stroke="#c8c800" stroke-width="0.5"/><circle cx="789" cy="358" r="2.4" fill="#ffff20" stroke="#c8c800" stroke-width="0.5"/><circle cx="822.5" cy="344" r="1.8" fill="#78b830" stroke="#3a6a1a" stroke-width="0.5"/><circle cx="827" cy="341" r="1.8" fill="#78b830" stroke="#3a6a1a" stroke-width="0.5"/><circle cx="832" cy="338" r="1.8" fill="#78b830" stroke="#3a6a1a" stroke-width="0.5"/><circle cx="840" cy="337" r="1.8" fill="#78b830" stroke="#3a6a1a" stroke-width="0.5"/><circle cx="850" cy="336" r="1.8" fill="#78b830" stroke="#3a6a1a" stroke-width="0.5"/><circle cx="855" cy="355" r="1.8" fill="#78b830" stroke="#3a6a1a" stroke-width="0.5"/><circle cx="869.5" cy="366" r="1.8" fill="#78b830" stroke="#3a6a1a" stroke-width="0.5"/><circle cx="884.5" cy="355" r="1.8" fill="#78b830" stroke="#3a6a1a" stroke-width="0.5"/><circle cx="888.8" cy="336" r="1.8" fill="#78b830" stroke="#3a6a1a" stroke-width="0.5"/><circle cx="898" cy="337" r="1.8" fill="#78b830" stroke="#3a6a1a" stroke-width="0.5"/><circle cx="906" cy="338" r="1.8" fill="#78b830" stroke="#3a6a1a" stroke-width="0.5"/><circle cx="912" cy="341" r="1.8" fill="#78b830" stroke="#3a6a1a" stroke-width="0.5"/><circle cx="917" cy="344" r="1.8" fill="#78b830" stroke="#3a6a1a" stroke-width="0.5"/><circle cx="912" cy="361" r="1.8" fill="#78b830" stroke="#3a6a1a" stroke-width="0.5"/><circle cx="904.5" cy="401" r="1.8" fill="#78b830" stroke="#3a6a1a" stroke-width="0.5"/><circle cx="902.5" cy="446" r="1.8" fill="#78b830" stroke="#3a6a1a" stroke-width="0.5"/><circle cx="880.5" cy="446" r="1.8" fill="#78b830" stroke="#3a6a1a" stroke-width="0.5"/><circle cx="878" cy="401" r="1.8" fill="#78b830" stroke="#3a6a1a" stroke-width="0.5"/><circle cx="861" cy="401" r="1.8" fill="#78b830" stroke="#3a6a1a" stroke-width="0.5"/><circle cx="858.8" cy="446" r="1.8" fill="#78b830" stroke="#3a6a1a" stroke-width="0.5"/><circle cx="836.8" cy="446" r="1.8" fill="#78b830" stroke="#3a6a1a" stroke-width="0.5"/><circle cx="834.5" cy="401" r="1.8" fill="#78b830" stroke="#3a6a1a" stroke-width="0.5"/><circle cx="827" cy="361" r="1.8" fill="#78b830" stroke="#3a6a1a" stroke-width="0.5"/><circle cx="833" cy="348" r="1.8" fill="#78b830" stroke="#3a6a1a" stroke-width="0.5"/><circle cx="838" cy="348" r="1.8" fill="#78b830" stroke="#3a6a1a" stroke-width="0.5"/><circle cx="843" cy="346" r="1.8" fill="#78b830" stroke="#3a6a1a" stroke-width="0.5"/><circle cx="846" cy="346" r="1.8" fill="#78b830" stroke="#3a6a1a" stroke-width="0.5"/><circle cx="895" cy="346" r="1.8" fill="#78b830" stroke="#3a6a1a" stroke-width="0.5"/><circle cx="898" cy="346" r="1.8" fill="#78b830" stroke="#3a6a1a" stroke-width="0.5"/><circle cx="904" cy="348" r="1.8" fill="#78b830" stroke="#3a6a1a" stroke-width="0.5"/><circle cx="908" cy="349" r="1.8" fill="#78b830" stroke="#3a6a1a" stroke-width="0.5"/><path d="M771.800 328.800H830.800V459H771.800zM801 309.500V328.800M771.800 394H830.800" stroke="#555" stroke-width="0.700" stroke-dasharray="2 2" fill="none"/><circle cx="771.8" cy="328.8" r="1.700" fill="#d0d0d0" stroke="#333" stroke-width="0.600"/><circle cx="801" cy="328.8" r="1.700" fill="#d0d0d0" stroke="#333" stroke-width="0.600"/><circle cx="830.8" cy="328.8" r="1.700" fill="#d0d0d0" stroke="#333" stroke-width="0.600"/><circle cx="771.8" cy="394" r="1.700" fill="#d0d0d0" stroke="#333" stroke-width="0.600"/><circle cx="830.8" cy="394" r="1.700" fill="#d0d0d0" stroke="#333" stroke-width="0.600"/><circle cx="771.8" cy="459" r="1.700" fill="#d0d0d0" stroke="#333" stroke-width="0.600"/><circle cx="801" cy="459" r="1.700" fill="#d0d0d0" stroke="#333" stroke-width="0.600"/><circle cx="830.8" cy="459" r="1.700" fill="#d0d0d0" stroke="#333" stroke-width="0.600"/><circle cx="801" cy="309" r="1.700" fill="#d0d0d0" stroke="#333" stroke-width="0.600"/><circle cx="801" cy="394" r="2" fill="#d8d8d8" stroke="#444" stroke-width="0.600"/></svg><svg style="left:1050px;top:42px" width="230" height="130" viewBox="1050 42 230 130"><path d="M1056 61.500H1276" stroke="#333336" stroke-width="1"/><path d="M1072.500 61.500H1095" stroke="#4da3f0" stroke-width="1.500"/><g fill="#f0f0f0"><rect x="1056" y="45.500" width="2" height="2"/><rect x="1059.500" y="45.500" width="6.500" height="2"/><rect x="1056" y="49" width="2" height="2"/><rect x="1059.500" y="49" width="6.500" height="2"/><rect x="1056" y="52.500" width="2" height="2"/><rect x="1059.500" y="52.500" width="6.500" height="2"/></g><path d="M1081 45.500C1084 44.500 1087 46 1090 44.500L1088 53C1085 54.500 1082 53 1079 54z" fill="#3d97f0"/><path d="M1078 47.500V55C1081 54 1084 55.500 1087 54.500" fill="none" stroke="#2a6ab8" stroke-width="1"/><rect x="1101" y="45" width="10.500" height="10.500" rx="1.200" fill="#f0f0f0"/><path d="M1102 46h2.800v2.800h-2.800zM1107.600 46h2.800v2.800h-2.800zM1104.800 48.800h2.800v2.800h-2.800zM1102 51.600h2.800v2.800h-2.800zM1107.600 51.600h2.800v2.800h-2.800z" fill="#1a1a1c"/><circle cx="1129" cy="50" r="5.500" fill="#f0f0f0"/><g fill="#1a1a1c"><circle cx="1127.300" cy="48.300" r="0.900"/><circle cx="1130.700" cy="48.300" r="0.900"/><circle cx="1127.300" cy="51.700" r="0.900"/><circle cx="1130.700" cy="51.700" r="0.900"/></g><path d="M1147 50H1157" stroke="#f0f0f0" stroke-width="1.500"/><circle cx="1147.500" cy="50" r="1.800" fill="#f0f0f0"/><path d="M1169.500 54.500L1180 45" stroke="#f0f0f0" stroke-width="1.600" stroke-dasharray="3.500 1.800"/><path d="M1192 54l1.500 -5l1.500 3.500l1.500 -5l1.500 3.500l1.500 -5l1.500 3.500" stroke="#f0f0f0" stroke-width="1" fill="none"/><path d="M1215 45.500H1225L1222 50L1225 55.500H1215L1218 50z" fill="#f0f0f0"/><path d="M1217 47.500l2.500 2.500l2.500 -2.500M1217 53l2.500 -2.500l2.500 2.500" stroke="#1a1a1c" stroke-width="0.800" fill="none"/><path d="M1238 47L1241 45V55.500H1237V50z" fill="#f0f0f0"/><path d="M1243 45C1246 46 1247 49 1245.500 51C1247 53 1246 55 1243 55.500z" fill="#b8b8b8"/><rect x="1259.500" y="47.500" width="12" height="5" fill="#f0f0f0"/><path d="M1262 47.500v2.500M1264.500 47.500v2.500M1267 47.500v2.500M1269.500 47.500v2.500" stroke="#1a1a1c" stroke-width="0.600"/><path d="M1137 78.500A1 1 0 0 1 1138 77.500H1141L1142 79H1146.500V85.500H1137z" fill="#f0f0f0"/><path d="M1144.500 75.500v4M1142.500 77.500h4" stroke="#f0f0f0" stroke-width="1"/><path d="M1140 82.500h4M1142 80.500v4" stroke="#28282b" stroke-width="0.800"/><path d="M1158 78.500V85.500M1154.500 82H1161.500" stroke="#f0f0f0" stroke-width="1.100"/><rect x="1197" y="79" width="5" height="5" rx="1" fill="none" stroke="#5a5a5e" stroke-width="1"/><path d="M1199 77.500H1203.500V82" fill="none" stroke="#5a5a5e" stroke-width="1"/><path d="M1234.500 79.500V84.500H1239V79.500" fill="none" stroke="#f0f0f0" stroke-width="1.400"/><path d="M1238 77.500H1240.500V80" fill="none" stroke="#f0f0f0" stroke-width="0.900"/><rect x="1056" y="95.500" width="220" height="12.500" fill="#1c1c1f"/><path d="M1063.500 100H1068.500L1066 103.500z" fill="#f0f0f0"/><path d="M1175.500 105L1176 102.500L1181 97.500L1183 99.500L1178 104.500z" fill="#f0f0f0"/><path d="M1241.500 98V105M1238 101.500H1245" stroke="#f0f0f0" stroke-width="1.200"/><path d="M1251 99A1 1 0 0 1 1252 98H1255L1256 99.500H1259.500V105.500H1251z" fill="#f0f0f0"/><rect x="1060" y="138.500" width="205.500" height="28" fill="#2b3245"/><path d="M1059.500 123L1061.800 125.500L1066 120.500" stroke="#4da3f0" stroke-width="1.300" fill="none"/><rect x="1071" y="110.500" width="25" height="25" fill="#ffffff"/><rect x="1071" y="140.500" width="25" height="24" fill="#6b6b6b"/><g transform="translate(0 123.3)" stroke="#f0f0f0" fill="none" stroke-width="0.800"><rect x="1215.500" y="-3.500" width="7" height="7" rx="0.800"/><path d="M1219 -1.800v3.600M1217.200 0h3.600"/><g stroke="#8a8a8e"><rect x="1228.500" y="-3.500" width="7" height="7"/><path d="M1232 -3.500v7M1228.500 0h7"/></g><rect x="1241.500" y="-3.500" width="7" height="7" rx="0.800" fill="#f0f0f0"/><path d="M1245 -2.500v3M1243.500 -0.800l1.500 1.800l1.500 -1.800M1243 2.300h4" stroke="#28282b"/><rect x="1256.500" y="-4" width="5.500" height="5.500" rx="0.800"/><rect x="1254.500" y="-2" width="5.500" height="6" rx="0.800" fill="#f0f0f0"/><path d="M1257.300 -0.500v3M1255.800 1h3" stroke="#28282b"/></g><g transform="translate(0 152.5)" stroke="#f0f0f0" fill="none" stroke-width="0.800"><rect x="1215.500" y="-3.500" width="7" height="7" rx="0.800"/><path d="M1219 -1.800v3.600M1217.200 0h3.600"/><g stroke="#8a8a8e"><rect x="1228.500" y="-3.500" width="7" height="7"/><path d="M1232 -3.500v7M1228.500 0h7"/></g><rect x="1241.500" y="-3.500" width="7" height="7" rx="0.800" fill="#f0f0f0"/><path d="M1245 -2.500v3M1243.500 -0.800l1.500 1.800l1.500 -1.800M1243 2.300h4" stroke="#28282b"/><rect x="1256.500" y="-4" width="5.500" height="5.500" rx="0.800"/><rect x="1254.500" y="-2" width="5.500" height="6" rx="0.800" fill="#f0f0f0"/><path d="M1257.300 -0.500v3M1255.800 1h3" stroke="#28282b"/></g></svg><span class="t" style="left:1166px;top:79px;font-size:8.5px;color:#f0f0f0;">Add</span><span class="t" style="left:1206px;top:79px;font-size:8px;color:#55555a;">복사</span><span class="t" style="left:1245px;top:79px;font-size:8.5px;color:#f0f0f0;">Assign</span><span class="t" style="left:1135px;top:98px;font-size:8.5px;color:#f0f0f0;">Primary</span><span class="t" style="left:1101.5px;top:120px;font-size:8px;color:#f0f0f0;letter-spacing:-0.2px;">FABRIC 1</span><span class="t" style="left:1101.5px;top:149.5px;font-size:8px;color:#5aa7ea;letter-spacing:-0.2px;">FABRIC 2</span><span class="t" style="left:1080px;top:256.1px;font-size:8px;color:#f0f0f0;"><i>2D</i> 선분 길이</span><span class="t" style="left:1209px;top:255.5px;font-size:8.5px;color:#8a8a8e;">237.53cm</span><div style="left:1080px;top:268.5px;width:182px;height:1px;background:#333337;"></div><span class="t" style="left:1080px;top:273.40000000000003px;font-size:8px;color:#f0f0f0;"><i>3D</i> 선분 길이</span><span class="t" style="left:1209px;top:272.8px;font-size:8.5px;color:#8a8a8e;">237.16cm</span><div style="left:1080px;top:285.8px;width:182px;height:1px;background:#333337;"></div><span class="t" style="left:1080px;top:290.40000000000003px;font-size:8px;color:#f0f0f0;">고무줄</span><svg style="left:1191px;top:290.3px" width="8" height="8" viewBox="0 0 8 8"><rect x="0.500" y="0.500" width="7" height="7" rx="1.500" fill="#1c1c1f" stroke="#8a8a8e" stroke-width="1"/></svg><span class="t" style="left:1203px;top:289.8px;font-size:8.5px;color:#f0f0f0;">Off</span><div style="left:1080px;top:302.8px;width:182px;height:1px;background:#333337;"></div><span class="t" style="left:1080px;top:307.8px;font-size:8px;color:#f0f0f0;">심지 테이프</span><svg style="left:1191px;top:307.7px" width="8" height="8" viewBox="0 0 8 8"><rect x="0.500" y="0.500" width="7" height="7" rx="1.500" fill="#1c1c1f" stroke="#8a8a8e" stroke-width="1"/></svg><span class="t" style="left:1203px;top:307.2px;font-size:8.5px;color:#f0f0f0;">Off</span><div style="left:1080px;top:320.2px;width:182px;height:1px;background:#333337;"></div><span class="t" style="left:1080px;top:325.1px;font-size:8px;color:#f0f0f0;">셔링 표현</span><svg style="left:1191px;top:325px" width="8" height="8" viewBox="0 0 8 8"><rect x="0.500" y="0.500" width="7" height="7" rx="1.500" fill="#1c1c1f" stroke="#8a8a8e" stroke-width="1"/></svg><span class="t" style="left:1203px;top:324.5px;font-size:8.5px;color:#f0f0f0;">Off</span><div style="left:1080px;top:337.5px;width:182px;height:1px;background:#333337;"></div><svg style="left:1069.5px;top:344px" width="7" height="5"><path d="M0.300 0.300H6.300L3.300 4.600z" fill="#f0f0f0"/></svg><span class="t" style="left:1080px;top:342.1px;font-size:8px;color:#f0f0f0;">도식화선 보기</span><svg style="left:1191px;top:341.5px" width="8" height="8" viewBox="0 0 8 8"><rect x="0" y="0" width="8" height="8" rx="1.500" fill="#3d97f0"/><path d="M1.700 4L3.400 5.800L6.400 2.300" stroke="#fff" stroke-width="1.200" fill="none"/></svg><span class="t" style="left:1203px;top:341.5px;font-size:8.5px;color:#f0f0f0;">On</span><div style="left:1080px;top:354.5px;width:182px;height:1px;background:#333337;"></div><span class="t" style="left:1092.5px;top:366.1px;font-size:8px;color:#f0f0f0;"><i>Z</i>축 거리 <i>(mm)</i></span><div style="left:1199px;top:355.5px;width:54px;height:13.5px;background:#1c1c1f;border-radius:3px"></div><span class="t" style="left:1206px;top:358.25px;font-size:8.5px;color:#f0f0f0;">0</span><div style="left:1199px;top:375.5px;width:55px;height:2px;background:#4a4a4e;border-radius:1px"></div><div style="left:1199px;top:375.5px;width:28px;height:2px;background:#c8c8c8;border-radius:1px"></div><div style="left:1224px;top:373.5px;width:6px;height:6px;background:#f4f4f4;border-radius:3px"></div><div style="left:1080px;top:384px;width:182px;height:1px;background:#333337;"></div><svg style="left:1057px;top:389.5px" width="7" height="5"><path d="M0.300 0.300H6.300L3.300 4.600z" fill="#f0f0f0"/></svg><span class="t" style="left:1067px;top:387.6px;font-size:8px;color:#5aa7ea;">원단</span><div style="left:1067px;top:398.5px;width:195px;height:1px;background:#333337;"></div><span class="t" style="left:1080px;top:403.6px;font-size:8px;color:#f0f0f0;">원단</span><div style="left:1180px;top:399.5px;width:69px;height:15px;background:#1c1c1f;border-radius:3px"></div><div style="left:1183px;top:401px;width:13px;height:12.5px;background:#6b6b6b;"></div><span class="t" style="left:1200.5px;top:403.5px;font-size:8px;color:#f0f0f0;letter-spacing:-0.2px;">FABRIC 2</span><svg style="left:1240px;top:405px" width="6" height="5"><path d="M0.300 0.300H5.700L3 4.300z" fill="#f0f0f0"/></svg><svg style="left:1252px;top:403px" width="8" height="8" viewBox="0 0 8 8"><path d="M4 0.500L7.500 4L4 7.500L0.500 4z" fill="none" stroke="#f0f0f0" stroke-width="1"/><circle cx="4" cy="4" r="1" fill="#f0f0f0"/></svg><div style="left:1080px;top:416px;width:182px;height:1px;background:#333337;"></div><svg style="left:1070.5px;top:422px" width="5" height="7"><path d="M0.300 0.300L4.600 3.300L0.300 6.300z" fill="#f0f0f0"/></svg><span class="t" style="left:1080px;top:421.1px;font-size:8px;color:#f0f0f0;">식서 방향</span><div style="left:1192.5px;top:417.5px;width:54px;height:14px;background:#1c1c1f;border-radius:3px"></div><span class="t" style="left:1197.0px;top:420.5px;font-size:8.5px;color:#f0f0f0;">0.0</span><svg style="left:1238px;top:419px" width="6" height="12"><path d="M0.500 4L3 0.500L5.500 4zM0.500 8L3 11.500L5.500 8z" fill="#f0f0f0"/></svg><svg style="left:1251px;top:420px" width="10" height="10" viewBox="0 0 10 10"><path d="M7.800 3A3.500 3.500 0 1 0 8.500 5.800" fill="none" stroke="#f0f0f0" stroke-width="1.200"/><path d="M5.800 3.200H8.800V0.300" fill="none" stroke="#f0f0f0" stroke-width="1.200"/></svg><div style="left:1080px;top:433.5px;width:182px;height:1px;background:#333337;"></div><span class="t" style="left:1080px;top:438.5px;font-size:8.5px;color:#f0f0f0;">Pattern Matching</span><div style="left:1185px;top:435px;width:77px;height:15px;background:#1c1c1f;border-radius:3px"></div><span class="t" style="left:1189px;top:439.1px;font-size:8px;color:#f0f0f0;">없음</span><svg style="left:1251px;top:440px" width="6" height="5"><path d="M0.300 0.300H5.700L3 4.300z" fill="#f0f0f0"/></svg><div style="left:1080px;top:451.5px;width:182px;height:1px;background:#333337;"></div><span class="t" style="left:1080px;top:456px;font-size:8.5px;color:#f0f0f0;">Pattern Matching Lock</span><svg style="left:1191px;top:455.5px" width="8" height="8" viewBox="0 0 8 8"><rect x="0.500" y="0.500" width="7" height="7" rx="1.500" fill="#1c1c1f" stroke="#8a8a8e" stroke-width="1"/></svg><span class="t" style="left:1203px;top:456px;font-size:8.5px;color:#f0f0f0;">Off</span><div style="left:1080px;top:468px;width:182px;height:1px;background:#333337;"></div><svg style="left:1057px;top:473.5px" width="7" height="5"><path d="M0.300 0.300H6.300L3.300 4.600z" fill="#f0f0f0"/></svg><span class="t" style="left:1067px;top:471.6px;font-size:8px;color:#5aa7ea;">본딩<i>/</i>스카이빙</span><div style="left:1067px;top:482.5px;width:195px;height:1px;background:#333337;"></div><span class="t" style="left:1080px;top:487.6px;font-size:8px;color:#f0f0f0;">심지 접착<i>/</i>본딩</span><svg style="left:1191px;top:486.5px" width="8" height="8" viewBox="0 0 8 8"><rect x="0.500" y="0.500" width="7" height="7" rx="1.500" fill="#1c1c1f" stroke="#8a8a8e" stroke-width="1"/></svg><span class="t" style="left:1203px;top:487px;font-size:8.5px;color:#f0f0f0;">Off</span><div style="left:1080px;top:499.5px;width:182px;height:1px;background:#333337;"></div><span class="t" style="left:1080px;top:504.1px;font-size:8px;color:#f0f0f0;">원단 깎기<i>/</i>스카이빙</span><svg style="left:1191px;top:503.5px" width="8" height="8" viewBox="0 0 8 8"><rect x="0.500" y="0.500" width="7" height="7" rx="1.500" fill="#1c1c1f" stroke="#8a8a8e" stroke-width="1"/></svg><span class="t" style="left:1203px;top:503.5px;font-size:8.5px;color:#f0f0f0;">Off</span><div style="left:1080px;top:516.5px;width:182px;height:1px;background:#333337;"></div><span class="t" style="left:1067px;top:521.6px;font-size:8px;color:#5aa7ea;">형태 유지</span><svg style="left:1194px;top:520.5px" width="8" height="8" viewBox="0 0 8 8"><rect x="0.500" y="0.500" width="7" height="7" rx="1.500" fill="#1c1c1f" stroke="#8a8a8e" stroke-width="1"/></svg><span class="t" style="left:1206px;top:521px;font-size:8.5px;color:#f0f0f0;">Off</span><div style="left:1067px;top:533.5px;width:195px;height:1px;background:#333337;"></div><svg style="left:1057px;top:538.5px" width="7" height="5"><path d="M0.300 0.300H6.300L3.300 4.600z" fill="#f0f0f0"/></svg><span class="t" style="left:1067px;top:536.6px;font-size:8px;color:#5aa7ea;">시뮬레이션 속성</span><div style="left:1067px;top:547.5px;width:195px;height:1px;background:#333337;"></div><span class="t" style="left:1080px;top:552.5px;font-size:8px;color:#f0f0f0;">입자 간격 <i>(mm)</i></span><div style="left:1204px;top:549.4px;width:55px;height:14px;background:#1c1c1f;border-radius:3px"></div><span class="t" style="left:1209.5px;top:552.4px;font-size:8.5px;color:#f0f0f0;">12.0</span><div style="left:1080px;top:564.9px;width:182px;height:1px;background:#333337;"></div><span class="t" style="left:1080px;top:569.8000000000001px;font-size:8px;color:#f0f0f0;">레이어</span><div style="left:1204px;top:566.7px;width:55px;height:14px;background:#1c1c1f;border-radius:3px"></div><span class="t" style="left:1209.5px;top:569.7px;font-size:8.5px;color:#f0f0f0;">0</span><div style="left:1080px;top:582.2px;width:182px;height:1px;background:#333337;"></div><span class="t" style="left:1080px;top:587.1px;font-size:8px;color:#f0f0f0;">수축률 <i>-</i> 위사 <i>(%)</i></span><div style="left:1204px;top:584px;width:55px;height:14px;background:#1c1c1f;border-radius:3px"></div><span class="t" style="left:1209.5px;top:587.0px;font-size:8.5px;color:#f0f0f0;">100.00</span><div style="left:1080px;top:599.5px;width:182px;height:1px;background:#333337;"></div><span class="t" style="left:1080px;top:604.5px;font-size:8px;color:#f0f0f0;">수축률 <i>-</i> 경사 <i>(%)</i></span><div style="left:1204px;top:601.4px;width:55px;height:14px;background:#1c1c1f;border-radius:3px"></div><span class="t" style="left:1209.5px;top:604.4px;font-size:8.5px;color:#f0f0f0;">100.00</span><div style="left:1080px;top:616.9px;width:182px;height:1px;background:#333337;"></div><span class="t" style="left:1080px;top:621.8000000000001px;font-size:8px;color:#f0f0f0;">개별 두께 <i>-</i> 충돌<i>(mm)</i></span><div style="left:1204px;top:618.7px;width:55px;height:14px;background:#1c1c1f;border-radius:3px"></div><span class="t" style="left:1209.5px;top:621.7px;font-size:8.5px;color:#f0f0f0;">2.5</span><div style="left:1080px;top:634.2px;width:182px;height:1px;background:#333337;"></div><svg style="left:1070.5px;top:646px" width="5" height="7"><path d="M0.300 0.300L4.600 3.300L0.300 6.300z" fill="#f0f0f0"/></svg><span class="t" style="left:1080px;top:645.1px;font-size:8px;color:#f0f0f0;">압력</span><div style="left:1198px;top:635px;width:53px;height:13.5px;background:#1c1c1f;border-radius:3px"></div><span class="t" style="left:1203.5px;top:637.75px;font-size:8.5px;color:#f0f0f0;">0</span><div style="left:1192px;top:655px;width:66px;height:2px;background:#4a4a4e;border-radius:1px"></div><div style="left:1192px;top:655px;width:33px;height:2px;background:#c8c8c8;border-radius:1px"></div><div style="left:1222px;top:653px;width:6px;height:6px;background:#f4f4f4;border-radius:3px"></div><div style="left:1269.5px;top:253px;width:6.5px;height:417px;background:#0d0d0e;"></div><div style="left:1270px;top:329px;width:5px;height:230px;background:#5e5e60;border-radius:2.500px"></div></body></html>
